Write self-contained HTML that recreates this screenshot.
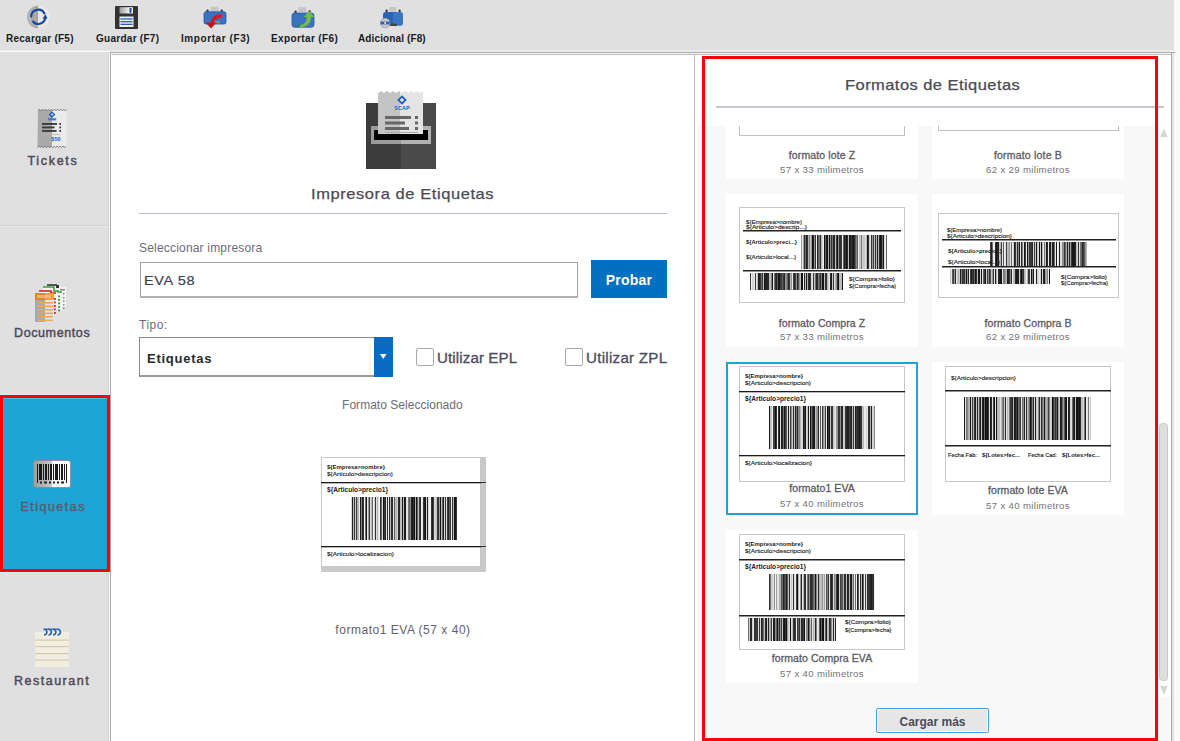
<!DOCTYPE html><html><head><meta charset="utf-8"><style>
html,body{margin:0;padding:0;}
body{width:1180px;height:741px;position:relative;overflow:hidden;background:#e0e0e0;font-family:'Liberation Sans',sans-serif;}
div{box-sizing:border-box;}
</style></head><body>
<div style="position:absolute;left:0px;top:50px;width:1180px;height:2px;background:#ececec"></div>
<div style="position:absolute;left:0px;top:51px;width:110px;height:1px;background:#fafafa"></div>
<div style="position:absolute;left:1174px;top:0px;width:6px;height:741px;background:#fafafa"></div>
<div style="position:absolute;left:0px;top:52px;width:110px;height:689px;background:#e0e0e0"></div>
<div style="position:absolute;left:108px;top:52px;width:1px;height:689px;background:#d4d4d4"></div>
<div style="position:absolute;left:109px;top:52px;width:1px;height:689px;background:#fafafa"></div>
<div style="position:absolute;left:0px;top:225px;width:108px;height:1px;background:#cfcfcf"></div>
<div style="position:absolute;left:0px;top:226px;width:108px;height:1px;background:#ececec"></div>
<div style="position:absolute;left:110px;top:52px;width:1065px;height:1px;background:#aaaaaa"></div>
<div style="position:absolute;left:110px;top:52px;width:1px;height:689px;background:#aaaaaa"></div>
<div style="position:absolute;left:111px;top:53px;width:1064px;height:688px;background:#f8f8f8"></div>
<div style="position:absolute;left:112px;top:54px;width:1059px;height:1px;background:#bbbbbb"></div>
<div style="position:absolute;left:111px;top:55px;width:1060px;height:686px;background:#ffffff"></div>
<div style="position:absolute;left:1171px;top:53px;width:1px;height:688px;background:#aaaaaa"></div>
<div style="position:absolute;left:1172px;top:53px;width:2px;height:688px;background:#e4e4e4"></div>
<div style="position:absolute;left:694px;top:55px;width:1px;height:686px;background:#bbbbbb"></div>
<svg style="position:absolute;left:0;top:0" width="440" height="32">
<defs>
<linearGradient id="rcg" x1="0" x2="1"><stop offset="0" stop-color="#b4b4b4"/><stop offset="0.48" stop-color="#a4a4a4"/><stop offset="0.5" stop-color="#e6e6e6"/><stop offset="1" stop-color="#ececec"/></linearGradient>
<linearGradient id="flg" x1="0" x2="1"><stop offset="0" stop-color="#9a9a9a"/><stop offset="0.7" stop-color="#f2f2f2"/></linearGradient>
<linearGradient id="redg" x1="0" x2="1" y1="1" y2="0"><stop offset="0" stop-color="#a81c22"/><stop offset="1" stop-color="#f01212"/></linearGradient>
<linearGradient id="blg" x1="0" x2="1"><stop offset="0.5" stop-color="#2c64b2"/><stop offset="0.5" stop-color="#3a76c6"/></linearGradient>
</defs>
<!-- recargar -->
<circle cx="38.2" cy="17" r="11.2" fill="url(#rcg)"/>
<circle cx="38.2" cy="17" r="8.6" fill="none" stroke="#d8d0c4" stroke-width="0.8" opacity="0.7"/>
<path d="M31.2,16.6 A7,7 0 0 1 44.4,13.4" fill="none" stroke="#1a48a0" stroke-width="2.2" stroke-linecap="round"/>
<path d="M45.2,17.6 A7,7 0 0 1 32.4,20.8" fill="none" stroke="#1a48a0" stroke-width="2.2"/>
<polygon points="42.6,18.6 47.6,18.4 45.3,14.2" fill="#1a48a0"/>
<!-- guardar -->
<rect x="115" y="6" width="23" height="23" rx="1" fill="#333"/>
<rect x="119.5" y="7.2" width="13.5" height="6.3" fill="url(#flg)"/>
<rect x="129.5" y="8" width="2" height="4.8" fill="#1a48a0"/>
<rect x="119.5" y="16.5" width="14" height="10.5" fill="#f0f0f0"/>
<rect x="120.5" y="18.3" width="12" height="1.3" fill="#2a5fb8"/><rect x="120.5" y="21" width="12" height="1.3" fill="#2a5fb8"/><rect x="120.5" y="23.7" width="12" height="1.3" fill="#2a5fb8"/>
<!-- importar -->
<rect x="210.8" y="6.8" width="8" height="4.6" fill="#c6c6c6"/>
<circle cx="207.5" cy="10.8" r="1.2" fill="#333"/><circle cx="221.8" cy="10.8" r="1.2" fill="#333"/>
<rect x="204" y="11.8" width="22" height="12.2" rx="2" fill="#3a72c2" stroke="#2456a6" stroke-width="0.8"/>
<rect x="214" y="21" width="6" height="2.4" fill="#8a8a8a"/>
<path d="M222,14.4 C215.6,14 211.5,17 211,22.6 L205.4,22.6 L211,28.4 L216.6,22.6 L214.2,22.6 C214.4,19.6 216.8,17.6 222,17.4 Z" fill="url(#redg)" transform="translate(0,0)"/>
<!-- exportar -->
<rect x="298.3" y="7.2" width="8" height="4.8" fill="#c6c6c6"/>
<circle cx="295.6" cy="11.8" r="1.2" fill="#333"/><circle cx="309.6" cy="11.4" r="1.2" fill="#333"/>
<rect x="292" y="13" width="22" height="14.2" rx="2.6" fill="#3a72c2" stroke="#2456a6" stroke-width="0.8"/>
<rect x="297.5" y="24.5" width="6" height="2.2" fill="#2c8a2c"/>
<path d="M300,27.4 C307,27.4 311.2,23 311,17 L314.2,17 L309.2,11 L303.6,17 L306.6,17 C306.8,21.6 304.6,24.6 300,25 Z" fill="#74bb4a"/>
<!-- adicional -->
<rect x="389.4" y="7" width="6.8" height="4.8" fill="#c6c6c6"/>
<circle cx="386.6" cy="10.8" r="1.2" fill="#333"/><circle cx="399.6" cy="10.8" r="1.2" fill="#333"/>
<rect x="383" y="12" width="20" height="13.8" rx="2.4" fill="url(#blg)"/>
<rect x="390.5" y="23.6" width="6.4" height="2.4" fill="#444"/>
<circle cx="385.2" cy="23" r="4.8" fill="#c8c8c8" stroke="#8a8a8a" stroke-width="0.6"/>
<rect x="380.6" y="21.6" width="9" height="2.8" fill="#2a62b8"/>
<circle cx="385.2" cy="23" r="1" fill="#eee"/>
</svg>
<div style="position:absolute;left:6px;top:34.14px;font-size:10px;line-height:10px;font-weight:bold;color:#1a1a1a;letter-spacing:0.25px;white-space:pre;">Recargar (F5)</div>
<div style="position:absolute;left:96px;top:34.14px;font-size:10px;line-height:10px;font-weight:bold;color:#1a1a1a;letter-spacing:0.27px;white-space:pre;">Guardar (F7)</div>
<div style="position:absolute;left:181px;top:34.14px;font-size:10px;line-height:10px;font-weight:bold;color:#1a1a1a;letter-spacing:0.58px;white-space:pre;">Importar (F3)</div>
<div style="position:absolute;left:271px;top:34.14px;font-size:10px;line-height:10px;font-weight:bold;color:#1a1a1a;letter-spacing:0.38px;white-space:pre;">Exportar (F6)</div>
<div style="position:absolute;left:358px;top:34.14px;font-size:10px;line-height:10px;font-weight:bold;color:#1a1a1a;letter-spacing:0.12px;white-space:pre;">Adicional (F8)</div>
<svg style="position:absolute;left:0;top:100px" width="100" height="50" viewBox="0 100 100 50">
<defs><linearGradient id="tk" x1="0" x2="1"><stop offset="0.5" stop-color="#a9a9a9"/><stop offset="0.5" stop-color="#ebebeb"/></linearGradient></defs>
<path d="M38,110.5 L39.5,109.2 L41.0,110.8 L42.5,109.2 L44.0,110.8 L45.5,109.2 L47.0,110.8 L48.5,109.2 L50.0,110.8 L51.5,109.2 L53.0,110.8 L54.5,109.2 L56.0,110.8 L57.5,109.2 L59.0,110.8 L60.5,109.2 L62.0,110.8 L63.5,109.2 L65.0,110.8 L66.5,109.2 L66.5,110.5 L66.5,146.5 L66.0,146.2 L64.5,147.6 L63.0,146.2 L61.5,147.6 L60.0,146.2 L58.5,147.6 L57.0,146.2 L55.5,147.6 L54.0,146.2 L52.5,147.6 L51.0,146.2 L49.5,147.6 L48.0,146.2 L46.5,147.6 L45.0,146.2 L43.5,147.6 L42.0,146.2 L40.5,147.6 L39.0,146.2 L37.5,147.6 Z" fill="url(#tk)"/>
<path d="M38,110.5 L39.5,109.2 L41.0,110.8 L42.5,109.2 L44.0,110.8 L45.5,109.2 L47.0,110.8 L48.5,109.2 L50.0,110.8 L51.5,109.2 L53.0,110.8 L54.5,109.2 L56.0,110.8 L57.5,109.2 L59.0,110.8 L60.5,109.2 L62.0,110.8 L63.5,109.2 L65.0,110.8 L66.5,109.2" fill="none" stroke="#6a6a6a" stroke-width="0.8"/>
<path d="M66,146.2 L66.0,146.2 L64.5,147.6 L63.0,146.2 L61.5,147.6 L60.0,146.2 L58.5,147.6 L57.0,146.2 L55.5,147.6 L54.0,146.2 L52.5,147.6 L51.0,146.2 L49.5,147.6 L48.0,146.2 L46.5,147.6 L45.0,146.2 L43.5,147.6 L42.0,146.2 L40.5,147.6 L39.0,146.2 L37.5,147.6" fill="none" stroke="#6a6a6a" stroke-width="0.8"/>
<rect x="50.3" y="112.9" width="3.4" height="3.4" transform="rotate(45 52 114.6)" fill="none" stroke="#1a5fc8" stroke-width="1.3"/>
<rect x="48.2" y="118.2" width="8" height="2.2" fill="#2a68c0" opacity="0.85"/>
<rect x="42" y="123" width="15" height="1.9" fill="#3a3a3a"/><rect x="59.4" y="123" width="1.6" height="1.9" fill="#3a3a3a"/>
<rect x="42" y="126.5" width="12.5" height="1.9" fill="#3a3a3a"/><rect x="59.4" y="126.5" width="1.6" height="1.9" fill="#3a3a3a"/>
<rect x="42" y="130" width="14.5" height="1.9" fill="#3a3a3a"/><rect x="59.4" y="130" width="1.6" height="1.9" fill="#3a3a3a"/>
<rect x="42" y="134" width="18" height="0.8" fill="#b8b8b8"/>
<text x="56" y="141.2" font-family="Liberation Sans" font-size="5.6" font-weight="bold" fill="#1a5fc8" text-anchor="middle">$50</text>
</svg>
<div style="position:absolute;left:27.5px;top:154.62px;font-size:12.5px;line-height:12.5px;font-weight:normal;color:#4a4a5c;letter-spacing:1.68px;white-space:pre;-webkit-text-stroke:0.45px #4a4a5c;">Tickets</div>
<svg style="position:absolute;left:34px;top:282px" width="35" height="41">
<path d="M13,2 h10 l3,2 v1 h6 v20 h-19 Z" fill="#f4f4f4"/>
<rect x="13" y="2" width="10" height="2" fill="#555"/><rect x="22" y="3" width="3" height="3" fill="#333"/>
<rect x="26" y="7" width="5" height="1.5" fill="#888"/>
<g fill="#888"><rect x="29" y="11" width="1.5" height="1.5"/><rect x="29" y="15" width="1.5" height="1.5"/><rect x="29" y="18.5" width="1.5" height="1.5"/><rect x="29" y="22" width="1.5" height="1.5"/><rect x="29" y="25.5" width="1.5" height="1.5"/></g>
<path d="M9,5 h11 l4,4 h4 v19 h-19 Z" fill="#f6f6f6"/>
<path d="M9,5 h11 v4 h4 v1 h4" fill="none" stroke="#3aa03a" stroke-width="1.6"/>
<g fill="#3aa03a"><rect x="24" y="13.5" width="2" height="1.8"/><rect x="24" y="17" width="2" height="1.8"/><rect x="24" y="20.5" width="2" height="1.8"/><rect x="24" y="24" width="2" height="1.8"/><rect x="24" y="27.5" width="2" height="1.8"/></g>
<path d="M5,9 h9 v2 h5 l3,3 v17 h-17 Z" fill="#f6f6f6"/>
<path d="M5,9 h12 v2 h5" fill="none" stroke="#d81818" stroke-width="1.6"/>
<g fill="#e01818"><rect x="20" y="16" width="1.8" height="1.8"/><rect x="20" y="19.5" width="1.8" height="1.8"/><rect x="20" y="23" width="1.8" height="1.8"/><rect x="20" y="26.5" width="1.8" height="1.8"/><rect x="20" y="30" width="1.8" height="1.8"/></g>
<rect x="1" y="11" width="19" height="29" fill="#dde4ea"/>
<rect x="1" y="11" width="10" height="29" fill="#a6a9ae"/>
<rect x="1" y="11" width="19" height="7" fill="#d88a2a"/>
<rect x="11" y="11" width="9" height="7" fill="#eda040"/>
<rect x="3" y="13" width="14" height="3" fill="#f6d0a0" opacity="0.6"/>
<g fill="#f0a850"><rect x="4" y="20" width="15" height="1.6"/><rect x="4" y="23.5" width="15" height="1.6"/><rect x="4" y="27" width="15" height="1.6"/><rect x="4" y="30.5" width="15" height="1.6"/><rect x="4" y="34" width="15" height="1.6"/><rect x="4" y="37.5" width="15" height="1.6"/></g>
</svg>
<div style="position:absolute;left:14px;top:326.62px;font-size:12.5px;line-height:12.5px;font-weight:normal;color:#4a4a5c;letter-spacing:0.61px;white-space:pre;-webkit-text-stroke:0.45px #4a4a5c;">Documentos</div>
<div style="position:absolute;left:0px;top:394px;width:110px;height:1px;background:#d8ecee"></div>
<div style="position:absolute;left:0px;top:395px;width:110px;height:177px;background:#1ea5d6;border:3px solid #ff0000"></div>
<div style="position:absolute;left:3px;top:398px;width:104px;height:1px;background:#3cbde8"></div>
<div style="position:absolute;left:0px;top:572px;width:108px;height:1px;background:#d8ecee"></div>
<svg style="position:absolute;left:33px;top:460px" width="38" height="29">
<defs><linearGradient id="bc" x1="0" x2="1"><stop offset="0" stop-color="#9c9c9c"/><stop offset="0.5" stop-color="#c8c8c8"/><stop offset="0.5" stop-color="#f4f4f4"/><stop offset="1" stop-color="#ffffff"/></linearGradient></defs>
<rect x="0.5" y="0.5" width="37" height="27" rx="2.5" fill="url(#bc)" stroke="#8a8a8a" stroke-width="0.8"/>
<g fill="#1a1a1a"><rect x="4" y="4" width="1" height="19"/><rect x="6" y="4" width="3" height="16"/><rect x="10" y="4" width="1" height="16"/><rect x="12" y="4" width="2" height="16"/><rect x="15" y="4" width="1" height="16"/><rect x="17" y="4" width="2" height="16"/><rect x="20" y="4" width="1" height="16"/><rect x="22" y="4" width="3" height="16"/><rect x="26" y="4" width="1" height="16"/><rect x="28" y="4" width="2" height="16"/><rect x="31" y="4" width="1" height="16"/><rect x="33" y="4" width="1" height="19"/></g>
<g fill="#222"><rect x="7" y="21.5" width="2" height="2"/><rect x="11" y="21.5" width="3" height="2"/><rect x="16" y="21.5" width="2" height="2"/><rect x="20" y="21.5" width="2" height="2"/><rect x="24" y="21.5" width="2" height="2"/><rect x="28" y="21.5" width="3" height="2"/></g>
</svg>
<div style="position:absolute;left:20.5px;top:500.62px;font-size:12.5px;line-height:12.5px;font-weight:normal;color:#56606c;letter-spacing:1.47px;white-space:pre;-webkit-text-stroke:0.45px #56606c;">Etiquetas</div>
<svg style="position:absolute;left:35px;top:627px" width="35" height="41">
<rect x="0" y="5" width="34" height="35" fill="#f1ede1"/>
<g fill="#d6cba8"><rect x="0" y="12.5" width="34" height="1.2"/><rect x="0" y="19" width="34" height="1.2"/><rect x="0" y="26" width="34" height="1.2"/><rect x="0" y="32.5" width="34" height="1.2"/></g>
<g fill="none" stroke="#1f5fb8" stroke-width="1.6"><path d="M9,2.2 a2.9,2.9 0 1 1 0,5.8"/><path d="M13.5,2.2 a2.9,2.9 0 1 1 0,5.8"/><path d="M18,2.2 a2.9,2.9 0 1 1 0,5.8"/><path d="M22.5,2.2 a2.9,2.9 0 1 1 0,5.8"/></g><path d="M8.5,2.2 h15" stroke="#1f5fb8" stroke-width="1.2"/>
</svg>
<div style="position:absolute;left:14px;top:674.52px;font-size:12.5px;line-height:12.5px;font-weight:normal;color:#4a4a5c;letter-spacing:1.5px;white-space:pre;-webkit-text-stroke:0.45px #4a4a5c;">Restaurant</div>
<svg style="position:absolute;left:366px;top:91px" width="72" height="78">
<defs><linearGradient id="pg" x1="0" x2="1"><stop offset="0.5" stop-color="#3c3c3c"/><stop offset="0.5" stop-color="#4a4a4a"/></linearGradient>
<linearGradient id="pp" x1="0" x2="1"><stop offset="0.5" stop-color="#c4c4c4"/><stop offset="0.5" stop-color="#e4e4e4"/></linearGradient>
<linearGradient id="ps" x1="0" x2="1"><stop offset="0.5" stop-color="#9a9a9a"/><stop offset="0.5" stop-color="#b2b2b2"/></linearGradient></defs>
<rect x="0" y="12" width="70" height="66" fill="url(#pg)"/>
<rect x="5" y="35" width="60" height="18" fill="url(#ps)"/>
<rect x="8" y="39" width="54" height="10" fill="#000"/>
<path d="M12,2 l3,-2 l3,2 l3,-2 l3,2 l3,-2 l3,2 l3,-2 l3,2 l3,-2 l3,2 l3,-2 l3,2 l3,-2 l3,2 l3,-2 V43 H12 Z" fill="url(#pp)"/>
<rect x="33.5" y="6.5" width="5" height="5" transform="rotate(45 36 9)" fill="none" stroke="#1a5fc8" stroke-width="1.8"/>
<text x="36" y="19" font-family="Liberation Sans" font-size="5.5" font-weight="bold" fill="#1a5fc8" text-anchor="middle">SCAP</text>
<rect x="19" y="25" width="26" height="3" fill="#666"/><rect x="49" y="25" width="3" height="3" fill="#666"/>
<rect x="19" y="30.5" width="20" height="3" fill="#666"/><rect x="49" y="30.5" width="3" height="3" fill="#666"/>
<rect x="19" y="36" width="24" height="3" fill="#666"/><rect x="49" y="36" width="3" height="3" fill="#666"/>
<rect x="19" y="41" width="33" height="1" fill="#aaa"/>
</svg>
<div style="position:absolute;left:311px;top:185.60px;font-size:15px;line-height:15px;font-weight:normal;color:#4a4a55;letter-spacing:0.52px;white-space:pre;-webkit-text-stroke:0.25px #4a4a55;transform:scaleX(1.1);transform-origin:0 0;">Impresora de Etiquetas</div>
<div style="position:absolute;left:139px;top:213px;width:528px;height:1px;background:#b4b8c4"></div>
<div style="position:absolute;left:139px;top:242.04px;font-size:12px;line-height:12px;font-weight:normal;color:#6c6c78;letter-spacing:0.19px;white-space:pre;">Seleccionar impresora</div>
<div style="position:absolute;left:140px;top:262px;width:438px;height:36px;background:#fff;border:1px solid #a0a0a0;border-bottom:2px solid #b0b0b0;border-radius:1px"></div>
<div style="position:absolute;left:144.3px;top:273.80px;font-size:13px;line-height:13px;font-weight:normal;color:#3c3c4a;letter-spacing:0.55px;white-space:pre;-webkit-text-stroke:0.15px #3c3c4a;transform:scaleX(1.12);transform-origin:0 0;">EVA 58</div>
<div style="position:absolute;left:591px;top:260px;width:76px;height:38px;background:#0070c0"></div>
<div style="position:absolute;left:479px;width:300px;text-align:center;top:273.25px;font-size:14px;line-height:14px;font-weight:bold;color:#ffffff;letter-spacing:0.2px;white-space:pre;">Probar</div>
<div style="position:absolute;left:139px;top:318.84px;font-size:12px;line-height:12px;font-weight:normal;color:#6c6c78;letter-spacing:0.5px;white-space:pre;">Tipo:</div>
<div style="position:absolute;left:139px;top:337px;width:254px;height:40px;background:#fff;border:1px solid #8a8a8a;border-bottom:2px solid #9a9a9a"></div>
<div style="position:absolute;left:374px;top:337px;width:19px;height:40px;background:#0a6cc0"></div>
<svg style="position:absolute;left:379px;top:353px" width="9" height="7"><polygon points="1,1 7.5,1 4.25,6" fill="#fff"/></svg>
<div style="position:absolute;left:147px;top:351.70px;font-size:13px;line-height:13px;font-weight:bold;color:#2a2a32;letter-spacing:0.75px;white-space:pre;">Etiquetas</div>
<div style="position:absolute;left:416px;top:348px;width:18px;height:18px;background:#fff;border:1px solid #a8a8a8;border-radius:2px"></div>
<div style="position:absolute;left:437px;top:351.05px;font-size:14px;line-height:14px;font-weight:normal;color:#4c4c5c;letter-spacing:0.1px;white-space:pre;-webkit-text-stroke:0.3px #4c4c5c;transform:scaleX(1.08);transform-origin:0 0;">Utilizar EPL</div>
<div style="position:absolute;left:565px;top:348px;width:18px;height:18px;background:#fff;border:1px solid #a8a8a8;border-radius:2px"></div>
<div style="position:absolute;left:586px;top:350.75px;font-size:14px;line-height:14px;font-weight:normal;color:#4c4c5c;letter-spacing:0.25px;white-space:pre;-webkit-text-stroke:0.3px #4c4c5c;transform:scaleX(1.08);transform-origin:0 0;">Utilizar ZPL</div>
<div style="position:absolute;left:252.39999999999998px;width:300px;text-align:center;top:398.94px;font-size:12px;line-height:12px;font-weight:normal;color:#6c6c78;letter-spacing:0.03px;white-space:pre;">Formato Seleccionado</div>
<div style="position:absolute;left:321px;top:457px;width:165px;height:115px;background:#c9c9c9"></div>
<div style="position:absolute;left:321px;top:457px;width:160px;height:110px"><svg width="160" height="110" style="position:absolute;left:0;top:0"><rect x="0.5" y="0.5" width="159" height="109" fill="#fff" stroke="#c8c8c8"/><text x="6" y="12" font-family="Liberation Sans" font-size="5.6" font-weight="bold" fill="#222" textLength="58" lengthAdjust="spacingAndGlyphs">${Empresa&gt;nombre}</text><text x="6" y="19" font-family="Liberation Sans" font-size="5.6" font-weight="normal" fill="#222" stroke="#222" stroke-width="0.12" textLength="66" lengthAdjust="spacingAndGlyphs">${Articulo&gt;descripcion}</text><rect x="0" y="25" width="160" height="1.3" fill="#1a1a1a"/><text x="6" y="35" font-family="Liberation Sans" font-size="6.8" font-weight="bold" fill="#222" textLength="61" lengthAdjust="spacingAndGlyphs">${Articulo&gt;precio1}</text><rect x="30" y="40" width="1" height="43" fill="#d9d9d9"/><rect x="31" y="40" width="1" height="43" fill="#1c1c1c"/><rect x="32" y="40" width="1" height="43" fill="#bebebe"/><rect x="33" y="40" width="1" height="43" fill="#333333"/><rect x="34" y="40" width="1" height="43" fill="#cecece"/><rect x="35" y="40" width="1" height="43" fill="#383838"/><rect x="36" y="40" width="1" height="43" fill="#b0b0b0"/><rect x="37" y="40" width="1" height="43" fill="#b3b3b3"/><rect x="38" y="40" width="1" height="43" fill="#efefef"/><rect x="39" y="40" width="1" height="43" fill="#1c1c1c"/><rect x="40" y="40" width="1" height="43" fill="#868686"/><rect x="41" y="40" width="1" height="43" fill="#242424"/><rect x="42" y="40" width="1" height="43" fill="#333333"/><rect x="43" y="40" width="1" height="43" fill="#f4f4f4"/><rect x="44" y="40" width="1" height="43" fill="#717171"/><rect x="45" y="40" width="1" height="43" fill="#151515"/><rect x="46" y="40" width="1" height="43" fill="#e8e8e8"/><rect x="47" y="40" width="1" height="43" fill="#999999"/><rect x="48" y="40" width="1" height="43" fill="#3d3d3d"/><rect x="49" y="40" width="1" height="43" fill="#dadada"/><rect x="50" y="40" width="1" height="43" fill="#bcbcbc"/><rect x="51" y="40" width="1" height="43" fill="#5f5f5f"/><rect x="52" y="40" width="1" height="43" fill="#f4f4f4"/><rect x="53" y="40" width="1" height="43" fill="#d2d2d2"/><rect x="54" y="40" width="1" height="43" fill="#333333"/><rect x="55" y="40" width="1" height="43" fill="#dcdcdc"/><rect x="56" y="40" width="1" height="43" fill="#b7b7b7"/><rect x="57" y="40" width="1" height="43" fill="#e3e3e3"/><rect x="58" y="40" width="1" height="43" fill="#f3f3f3"/><rect x="59" y="40" width="1" height="43" fill="#343434"/><rect x="60" y="40" width="1" height="43" fill="#666666"/><rect x="61" y="40" width="1" height="43" fill="#e1e1e1"/><rect x="62" y="40" width="1" height="43" fill="#121212"/><rect x="63" y="40" width="1" height="43" fill="#383838"/><rect x="64" y="40" width="1" height="43" fill="#262626"/><rect x="65" y="40" width="1" height="43" fill="#e7e7e7"/><rect x="66" y="40" width="1" height="43" fill="#303030"/><rect x="67" y="40" width="1" height="43" fill="#eeeeee"/><rect x="68" y="40" width="1" height="43" fill="#2e2e2e"/><rect x="69" y="40" width="1" height="43" fill="#bcbcbc"/><rect x="70" y="40" width="1" height="43" fill="#313131"/><rect x="71" y="40" width="1" height="43" fill="#2f2f2f"/><rect x="72" y="40" width="1" height="43" fill="#e5e5e5"/><rect x="73" y="40" width="1" height="43" fill="#5c5c5c"/><rect x="74" y="40" width="1" height="43" fill="#c2c2c2"/><rect x="75" y="40" width="1" height="43" fill="#b3b3b3"/><rect x="76" y="40" width="1" height="43" fill="#cecece"/><rect x="77" y="40" width="1" height="43" fill="#2d2d2d"/><rect x="78" y="40" width="1" height="43" fill="#282828"/><rect x="79" y="40" width="1" height="43" fill="#bdbdbd"/><rect x="80" y="40" width="1" height="43" fill="#c1c1c1"/><rect x="81" y="40" width="1" height="43" fill="#1d1d1d"/><rect x="82" y="40" width="1" height="43" fill="#bbbbbb"/><rect x="83" y="40" width="1" height="43" fill="#191919"/><rect x="84" y="40" width="1" height="43" fill="#1e1e1e"/><rect x="85" y="40" width="1" height="43" fill="#e0e0e0"/><rect x="86" y="40" width="1" height="43" fill="#e5e5e5"/><rect x="87" y="40" width="1" height="43" fill="#777777"/><rect x="88" y="40" width="1" height="43" fill="#626262"/><rect x="89" y="40" width="1" height="43" fill="#8a8a8a"/><rect x="90" y="40" width="1" height="43" fill="#212121"/><rect x="91" y="40" width="1" height="43" fill="#1c1c1c"/><rect x="92" y="40" width="1" height="43" fill="#2f2f2f"/><rect x="93" y="40" width="1" height="43" fill="#111111"/><rect x="94" y="40" width="1" height="43" fill="#b1b1b1"/><rect x="95" y="40" width="1" height="43" fill="#161616"/><rect x="96" y="40" width="1" height="43" fill="#5f5f5f"/><rect x="97" y="40" width="1" height="43" fill="#c5c5c5"/><rect x="98" y="40" width="1" height="43" fill="#3a3a3a"/><rect x="99" y="40" width="1" height="43" fill="#2d2d2d"/><rect x="100" y="40" width="1" height="43" fill="#f4f4f4"/><rect x="101" y="40" width="1" height="43" fill="#e3e3e3"/><rect x="102" y="40" width="1" height="43" fill="#393939"/><rect x="103" y="40" width="1" height="43" fill="#202020"/><rect x="104" y="40" width="1" height="43" fill="#151515"/><rect x="105" y="40" width="1" height="43" fill="#d9d9d9"/><rect x="106" y="40" width="1" height="43" fill="#1c1c1c"/><rect x="107" y="40" width="1" height="43" fill="#dfdfdf"/><rect x="108" y="40" width="1" height="43" fill="#ededed"/><rect x="109" y="40" width="1" height="43" fill="#f3f3f3"/><rect x="110" y="40" width="1" height="43" fill="#323232"/><rect x="111" y="40" width="1" height="43" fill="#202020"/><rect x="112" y="40" width="1" height="43" fill="#3f3f3f"/><rect x="113" y="40" width="1" height="43" fill="#d7d7d7"/><rect x="114" y="40" width="1" height="43" fill="#d3d3d3"/><rect x="115" y="40" width="1" height="43" fill="#c2c2c2"/><rect x="116" y="40" width="1" height="43" fill="#3c3c3c"/><rect x="117" y="40" width="1" height="43" fill="#353535"/><rect x="118" y="40" width="1" height="43" fill="#9f9f9f"/><rect x="119" y="40" width="1" height="43" fill="#111111"/><rect x="120" y="40" width="1" height="43" fill="#bfbfbf"/><rect x="121" y="40" width="1" height="43" fill="#656565"/><rect x="122" y="40" width="1" height="43" fill="#1a1a1a"/><rect x="123" y="40" width="1" height="43" fill="#dbdbdb"/><rect x="124" y="40" width="1" height="43" fill="#313131"/><rect x="125" y="40" width="1" height="43" fill="#e0e0e0"/><rect x="126" y="40" width="1" height="43" fill="#3c3c3c"/><rect x="127" y="40" width="1" height="43" fill="#272727"/><rect x="128" y="40" width="1" height="43" fill="#555555"/><rect x="129" y="40" width="1" height="43" fill="#3f3f3f"/><rect x="130" y="40" width="1" height="43" fill="#efefef"/><rect x="131" y="40" width="1" height="43" fill="#323232"/><rect x="132" y="40" width="1" height="43" fill="#b9b9b9"/><rect x="133" y="40" width="1" height="43" fill="#171717"/><rect x="134" y="40" width="1" height="43" fill="#181818"/><rect x="135" y="40" width="1" height="43" fill="#383838"/><rect x="0" y="89" width="160" height="1.3" fill="#1a1a1a"/><text x="6" y="99" font-family="Liberation Sans" font-size="5.6" font-weight="normal" fill="#222" stroke="#222" stroke-width="0.12" textLength="67" lengthAdjust="spacingAndGlyphs">${Articulo&gt;localizacion}</text></svg></div>
<div style="position:absolute;left:481px;top:482px;width:5px;height:1px;background:#333"></div>
<div style="position:absolute;left:481px;top:546px;width:5px;height:1px;background:#333"></div>
<div style="position:absolute;left:253px;width:300px;text-align:center;top:623.94px;font-size:12px;line-height:12px;font-weight:normal;color:#62626e;letter-spacing:0.52px;white-space:pre;">formato1 EVA (57 x 40)</div>
<div style="position:absolute;left:697px;top:126px;width:474px;height:615px;background:#f8f8f8"></div>
<div style="position:absolute;left:1158px;top:126px;width:13px;height:571px;background:#ffffff"></div>
<svg style="position:absolute;left:1158px;top:126px" width="13" height="571"><polygon points="2,11 6,2.5 9.5,11" fill="#d6d6d6"/><rect x="1.5" y="297.5" width="8" height="257" rx="3" fill="#dedede" stroke="#c8c8c8"/><polygon points="2,560 9.5,560 6,569" fill="#d6d6d6"/></svg>
<div style="position:absolute;left:844.5px;top:76.60px;font-size:15px;line-height:15px;font-weight:normal;color:#4a4a52;letter-spacing:0.4px;white-space:pre;-webkit-text-stroke:0.25px #4a4a52;transform:scaleX(1.1);transform-origin:0 0;">Formatos de Etiquetas</div>
<div style="position:absolute;left:716px;top:106px;width:448px;height:2px;background:#c4c8d0"></div>
<div style="position:absolute;left:726px;top:126px;width:192px;height:53px;background:#fff"></div>
<div style="position:absolute;left:739px;top:126px;width:166px;height:10px;border:1px solid #c0c0c0;border-top:none"></div>
<div style="position:absolute;left:672px;width:300px;text-align:center;top:150.21px;font-size:10.5px;line-height:10.5px;font-weight:normal;color:#5a5a62;letter-spacing:0.12px;white-space:pre;-webkit-text-stroke:0.3px #5a5a62;">formato lote Z</div>
<div style="position:absolute;left:672px;width:300px;text-align:center;top:164.87px;font-size:9.6px;line-height:9.6px;font-weight:normal;color:#727278;letter-spacing:0.33px;white-space:pre;">57 x 33 milimetros</div>
<div style="position:absolute;left:932px;top:126px;width:192px;height:53px;background:#fff"></div>
<div style="position:absolute;left:938px;top:126px;width:181px;height:5px;border:1px solid #c0c0c0;border-top:none"></div>
<div style="position:absolute;left:878px;width:300px;text-align:center;top:150.21px;font-size:10.5px;line-height:10.5px;font-weight:normal;color:#5a5a62;letter-spacing:0.2px;white-space:pre;-webkit-text-stroke:0.3px #5a5a62;">formato lote B</div>
<div style="position:absolute;left:878px;width:300px;text-align:center;top:164.87px;font-size:9.6px;line-height:9.6px;font-weight:normal;color:#727278;letter-spacing:0.33px;white-space:pre;">62 x 29 milimetros</div>
<div style="position:absolute;left:726px;top:194px;width:192px;height:153px;background:#fff;"></div><div style="position:absolute;left:739px;top:207px;width:166px;height:96px;"><svg width="166" height="96" style="position:absolute;left:0;top:0"><rect x="0.5" y="0.5" width="165" height="95" fill="#fff" stroke="#c8c8c8"/><text x="7" y="17" font-family="Liberation Sans" font-size="5.2" font-weight="normal" fill="#222" stroke="#222" stroke-width="0.12" textLength="56" lengthAdjust="spacingAndGlyphs">${Empresa&gt;nombre}</text><text x="7" y="22" font-family="Liberation Sans" font-size="5.2" font-weight="normal" fill="#222" stroke="#222" stroke-width="0.12" textLength="61" lengthAdjust="spacingAndGlyphs">${Articulo&gt;descrip...}</text><rect x="4" y="23" width="158" height="1.5" fill="#222"/><text x="7" y="37" font-family="Liberation Sans" font-size="5.4" font-weight="bold" fill="#222" textLength="51" lengthAdjust="spacingAndGlyphs">${Articulo&gt;preci...}</text><text x="7" y="52" font-family="Liberation Sans" font-size="5.4" font-weight="normal" fill="#222" stroke="#222" stroke-width="0.12" textLength="50" lengthAdjust="spacingAndGlyphs">${Articulo&gt;local...}</text><rect x="62" y="28" width="1" height="34" fill="#9c9c9c"/><rect x="63" y="28" width="1" height="34" fill="#ebebeb"/><rect x="64" y="28" width="1" height="34" fill="#a0a0a0"/><rect x="65" y="28" width="1" height="34" fill="#303030"/><rect x="66" y="28" width="1" height="34" fill="#6c6c6c"/><rect x="67" y="28" width="1" height="34" fill="#232323"/><rect x="68" y="28" width="1" height="34" fill="#323232"/><rect x="69" y="28" width="1" height="34" fill="#b5b5b5"/><rect x="70" y="28" width="1" height="34" fill="#878787"/><rect x="71" y="28" width="1" height="34" fill="#c4c4c4"/><rect x="72" y="28" width="1" height="34" fill="#989898"/><rect x="73" y="28" width="1" height="34" fill="#121212"/><rect x="74" y="28" width="1" height="34" fill="#1f1f1f"/><rect x="75" y="28" width="1" height="34" fill="#909090"/><rect x="76" y="28" width="1" height="34" fill="#353535"/><rect x="77" y="28" width="1" height="34" fill="#f2f2f2"/><rect x="78" y="28" width="1" height="34" fill="#222222"/><rect x="79" y="28" width="1" height="34" fill="#5f5f5f"/><rect x="80" y="28" width="1" height="34" fill="#787878"/><rect x="81" y="28" width="1" height="34" fill="#333333"/><rect x="82" y="28" width="1" height="34" fill="#bababa"/><rect x="83" y="28" width="1" height="34" fill="#d8d8d8"/><rect x="84" y="28" width="1" height="34" fill="#f1f1f1"/><rect x="85" y="28" width="1" height="34" fill="#141414"/><rect x="86" y="28" width="1" height="34" fill="#626262"/><rect x="87" y="28" width="1" height="34" fill="#222222"/><rect x="88" y="28" width="1" height="34" fill="#111111"/><rect x="89" y="28" width="1" height="34" fill="#b0b0b0"/><rect x="90" y="28" width="1" height="34" fill="#131313"/><rect x="91" y="28" width="1" height="34" fill="#878787"/><rect x="92" y="28" width="1" height="34" fill="#343434"/><rect x="93" y="28" width="1" height="34" fill="#777777"/><rect x="94" y="28" width="1" height="34" fill="#232323"/><rect x="95" y="28" width="1" height="34" fill="#2a2a2a"/><rect x="96" y="28" width="1" height="34" fill="#bfbfbf"/><rect x="97" y="28" width="1" height="34" fill="#3d3d3d"/><rect x="98" y="28" width="1" height="34" fill="#131313"/><rect x="99" y="28" width="1" height="34" fill="#939393"/><rect x="100" y="28" width="1" height="34" fill="#333333"/><rect x="101" y="28" width="1" height="34" fill="#303030"/><rect x="102" y="28" width="1" height="34" fill="#3e3e3e"/><rect x="103" y="28" width="1" height="34" fill="#e5e5e5"/><rect x="104" y="28" width="1" height="34" fill="#636363"/><rect x="105" y="28" width="1" height="34" fill="#1d1d1d"/><rect x="106" y="28" width="1" height="34" fill="#353535"/><rect x="107" y="28" width="1" height="34" fill="#111111"/><rect x="108" y="28" width="1" height="34" fill="#292929"/><rect x="109" y="28" width="1" height="34" fill="#bcbcbc"/><rect x="110" y="28" width="1" height="34" fill="#191919"/><rect x="111" y="28" width="1" height="34" fill="#202020"/><rect x="112" y="28" width="1" height="34" fill="#373737"/><rect x="113" y="28" width="1" height="34" fill="#222222"/><rect x="114" y="28" width="1" height="34" fill="#141414"/><rect x="115" y="28" width="1" height="34" fill="#353535"/><rect x="116" y="28" width="1" height="34" fill="#565656"/><rect x="117" y="28" width="1" height="34" fill="#848484"/><rect x="118" y="28" width="1" height="34" fill="#656565"/><rect x="119" y="28" width="1" height="34" fill="#ededed"/><rect x="120" y="28" width="1" height="34" fill="#c1c1c1"/><rect x="121" y="28" width="1" height="34" fill="#c7c7c7"/><rect x="122" y="28" width="1" height="34" fill="#7c7c7c"/><rect x="123" y="28" width="1" height="34" fill="#cfcfcf"/><rect x="124" y="28" width="1" height="34" fill="#c4c4c4"/><rect x="125" y="28" width="1" height="34" fill="#c9c9c9"/><rect x="126" y="28" width="1" height="34" fill="#e1e1e1"/><rect x="127" y="28" width="1" height="34" fill="#bababa"/><rect x="128" y="28" width="1" height="34" fill="#161616"/><rect x="129" y="28" width="1" height="34" fill="#303030"/><rect x="130" y="28" width="1" height="34" fill="#cecece"/><rect x="131" y="28" width="1" height="34" fill="#e2e2e2"/><rect x="132" y="28" width="1" height="34" fill="#363636"/><rect x="133" y="28" width="1" height="34" fill="#979797"/><rect x="134" y="28" width="1" height="34" fill="#3e3e3e"/><rect x="135" y="28" width="1" height="34" fill="#c0c0c0"/><rect x="136" y="28" width="1" height="34" fill="#333333"/><rect x="137" y="28" width="1" height="34" fill="#b9b9b9"/><rect x="138" y="28" width="1" height="34" fill="#1d1d1d"/><rect x="139" y="28" width="1" height="34" fill="#b8b8b8"/><rect x="140" y="28" width="1" height="34" fill="#2c2c2c"/><rect x="141" y="28" width="1" height="34" fill="#121212"/><rect x="142" y="28" width="1" height="34" fill="#272727"/><rect x="143" y="28" width="1" height="34" fill="#656565"/><rect x="144" y="28" width="1" height="34" fill="#181818"/><rect x="145" y="28" width="1" height="34" fill="#dadada"/><rect x="146" y="28" width="1" height="34" fill="#f2f2f2"/><rect x="147" y="28" width="1" height="34" fill="#666666"/><rect x="4" y="63" width="158" height="1.5" fill="#222"/><rect x="11" y="66" width="1" height="17" fill="#3c3c3c"/><rect x="12" y="66" width="1" height="17" fill="#f3f3f3"/><rect x="13" y="66" width="1" height="17" fill="#d2d2d2"/><rect x="14" y="66" width="1" height="17" fill="#d5d5d5"/><rect x="15" y="66" width="1" height="17" fill="#e9e9e9"/><rect x="16" y="66" width="1" height="17" fill="#3b3b3b"/><rect x="17" y="66" width="1" height="17" fill="#e2e2e2"/><rect x="18" y="66" width="1" height="17" fill="#bfbfbf"/><rect x="19" y="66" width="1" height="17" fill="#242424"/><rect x="20" y="66" width="1" height="17" fill="#202020"/><rect x="21" y="66" width="1" height="17" fill="#383838"/><rect x="22" y="66" width="1" height="17" fill="#686868"/><rect x="23" y="66" width="1" height="17" fill="#3a3a3a"/><rect x="24" y="66" width="1" height="17" fill="#c5c5c5"/><rect x="25" y="66" width="1" height="17" fill="#141414"/><rect x="26" y="66" width="1" height="17" fill="#252525"/><rect x="27" y="66" width="1" height="17" fill="#212121"/><rect x="28" y="66" width="1" height="17" fill="#282828"/><rect x="29" y="66" width="1" height="17" fill="#2c2c2c"/><rect x="30" y="66" width="1" height="17" fill="#bcbcbc"/><rect x="31" y="66" width="1" height="17" fill="#bebebe"/><rect x="32" y="66" width="1" height="17" fill="#838383"/><rect x="33" y="66" width="1" height="17" fill="#161616"/><rect x="34" y="66" width="1" height="17" fill="#eeeeee"/><rect x="35" y="66" width="1" height="17" fill="#6d6d6d"/><rect x="36" y="66" width="1" height="17" fill="#373737"/><rect x="37" y="66" width="1" height="17" fill="#222222"/><rect x="38" y="66" width="1" height="17" fill="#626262"/><rect x="39" y="66" width="1" height="17" fill="#151515"/><rect x="40" y="66" width="1" height="17" fill="#171717"/><rect x="41" y="66" width="1" height="17" fill="#3f3f3f"/><rect x="42" y="66" width="1" height="17" fill="#3b3b3b"/><rect x="43" y="66" width="1" height="17" fill="#606060"/><rect x="44" y="66" width="1" height="17" fill="#3b3b3b"/><rect x="45" y="66" width="1" height="17" fill="#282828"/><rect x="46" y="66" width="1" height="17" fill="#939393"/><rect x="47" y="66" width="1" height="17" fill="#8a8a8a"/><rect x="48" y="66" width="1" height="17" fill="#616161"/><rect x="49" y="66" width="1" height="17" fill="#292929"/><rect x="50" y="66" width="1" height="17" fill="#373737"/><rect x="51" y="66" width="1" height="17" fill="#b8b8b8"/><rect x="52" y="66" width="1" height="17" fill="#939393"/><rect x="53" y="66" width="1" height="17" fill="#e8e8e8"/><rect x="54" y="66" width="1" height="17" fill="#3d3d3d"/><rect x="55" y="66" width="1" height="17" fill="#2b2b2b"/><rect x="56" y="66" width="1" height="17" fill="#3d3d3d"/><rect x="57" y="66" width="1" height="17" fill="#919191"/><rect x="58" y="66" width="1" height="17" fill="#232323"/><rect x="59" y="66" width="1" height="17" fill="#5a5a5a"/><rect x="60" y="66" width="1" height="17" fill="#919191"/><rect x="61" y="66" width="1" height="17" fill="#bcbcbc"/><rect x="62" y="66" width="1" height="17" fill="#121212"/><rect x="63" y="66" width="1" height="17" fill="#111111"/><rect x="64" y="66" width="1" height="17" fill="#f0f0f0"/><rect x="65" y="66" width="1" height="17" fill="#262626"/><rect x="66" y="66" width="1" height="17" fill="#bebebe"/><rect x="67" y="66" width="1" height="17" fill="#191919"/><rect x="68" y="66" width="1" height="17" fill="#b0b0b0"/><rect x="69" y="66" width="1" height="17" fill="#303030"/><rect x="70" y="66" width="1" height="17" fill="#1f1f1f"/><rect x="71" y="66" width="1" height="17" fill="#3b3b3b"/><rect x="72" y="66" width="1" height="17" fill="#d5d5d5"/><rect x="73" y="66" width="1" height="17" fill="#dfdfdf"/><rect x="74" y="66" width="1" height="17" fill="#363636"/><rect x="75" y="66" width="1" height="17" fill="#c4c4c4"/><rect x="76" y="66" width="1" height="17" fill="#6e6e6e"/><rect x="77" y="66" width="1" height="17" fill="#282828"/><rect x="78" y="66" width="1" height="17" fill="#282828"/><rect x="79" y="66" width="1" height="17" fill="#7d7d7d"/><rect x="80" y="66" width="1" height="17" fill="#595959"/><rect x="81" y="66" width="1" height="17" fill="#2b2b2b"/><rect x="82" y="66" width="1" height="17" fill="#808080"/><rect x="83" y="66" width="1" height="17" fill="#161616"/><rect x="84" y="66" width="1" height="17" fill="#131313"/><rect x="85" y="66" width="1" height="17" fill="#c2c2c2"/><rect x="86" y="66" width="1" height="17" fill="#2f2f2f"/><rect x="87" y="66" width="1" height="17" fill="#323232"/><rect x="88" y="66" width="1" height="17" fill="#b6b6b6"/><rect x="89" y="66" width="1" height="17" fill="#d0d0d0"/><rect x="90" y="66" width="1" height="17" fill="#e6e6e6"/><rect x="91" y="66" width="1" height="17" fill="#2c2c2c"/><rect x="92" y="66" width="1" height="17" fill="#191919"/><rect x="93" y="66" width="1" height="17" fill="#c6c6c6"/><rect x="94" y="66" width="1" height="17" fill="#3a3a3a"/><rect x="95" y="66" width="1" height="17" fill="#dddddd"/><rect x="96" y="66" width="1" height="17" fill="#b5b5b5"/><rect x="97" y="66" width="1" height="17" fill="#909090"/><rect x="98" y="66" width="1" height="17" fill="#2e2e2e"/><rect x="99" y="66" width="1" height="17" fill="#141414"/><rect x="100" y="66" width="1" height="17" fill="#b7b7b7"/><rect x="101" y="66" width="1" height="17" fill="#bcbcbc"/><rect x="102" y="66" width="1" height="17" fill="#b8b8b8"/><rect x="103" y="66" width="1" height="17" fill="#171717"/><text x="110" y="74" font-family="Liberation Sans" font-size="5.2" font-weight="normal" fill="#222" stroke="#222" stroke-width="0.12" textLength="46" lengthAdjust="spacingAndGlyphs">${Compra&gt;folio}</text><text x="110" y="81" font-family="Liberation Sans" font-size="5.2" font-weight="normal" fill="#222" stroke="#222" stroke-width="0.12" textLength="47" lengthAdjust="spacingAndGlyphs">${Compra&gt;fecha}</text></svg></div><div style="position:absolute;left:672.0px;width:300px;text-align:center;top:317.51px;font-size:10.5px;line-height:10.5px;font-weight:normal;color:#5a5a62;letter-spacing:0.08px;white-space:pre;-webkit-text-stroke:0.3px #5a5a62;">formato Compra Z</div><div style="position:absolute;left:672.0px;width:300px;text-align:center;top:332.47px;font-size:9.6px;line-height:9.6px;font-weight:normal;color:#727278;letter-spacing:0.33px;white-space:pre;">57 x 33 milimetros</div>
<div style="position:absolute;left:932px;top:194px;width:192px;height:153px;background:#fff;"></div><div style="position:absolute;left:938px;top:213px;width:181px;height:85px;"><svg width="181" height="85" style="position:absolute;left:0;top:0"><rect x="0.5" y="0.5" width="180" height="84" fill="#fff" stroke="#c8c8c8"/><text x="9" y="19" font-family="Liberation Sans" font-size="5.2" font-weight="normal" fill="#222" stroke="#222" stroke-width="0.12" textLength="55" lengthAdjust="spacingAndGlyphs">${Empresa&gt;nombre}</text><text x="9" y="25" font-family="Liberation Sans" font-size="5.2" font-weight="normal" fill="#222" stroke="#222" stroke-width="0.12" textLength="65" lengthAdjust="spacingAndGlyphs">${Articulo&gt;descripcion}</text><rect x="4" y="26" width="174" height="1.5" fill="#222"/><rect x="52" y="29" width="1" height="25" fill="#3c3c3c"/><rect x="53" y="29" width="1" height="25" fill="#222222"/><rect x="54" y="29" width="1" height="25" fill="#707070"/><rect x="55" y="29" width="1" height="25" fill="#ececec"/><rect x="56" y="29" width="1" height="25" fill="#f1f1f1"/><rect x="57" y="29" width="1" height="25" fill="#313131"/><rect x="58" y="29" width="1" height="25" fill="#101010"/><rect x="59" y="29" width="1" height="25" fill="#353535"/><rect x="60" y="29" width="1" height="25" fill="#191919"/><rect x="61" y="29" width="1" height="25" fill="#cdcdcd"/><rect x="62" y="29" width="1" height="25" fill="#b5b5b5"/><rect x="63" y="29" width="1" height="25" fill="#3f3f3f"/><rect x="64" y="29" width="1" height="25" fill="#e4e4e4"/><rect x="65" y="29" width="1" height="25" fill="#595959"/><rect x="66" y="29" width="1" height="25" fill="#efefef"/><rect x="67" y="29" width="1" height="25" fill="#dfdfdf"/><rect x="68" y="29" width="1" height="25" fill="#3f3f3f"/><rect x="69" y="29" width="1" height="25" fill="#bfbfbf"/><rect x="70" y="29" width="1" height="25" fill="#b2b2b2"/><rect x="71" y="29" width="1" height="25" fill="#9b9b9b"/><rect x="72" y="29" width="1" height="25" fill="#e3e3e3"/><rect x="73" y="29" width="1" height="25" fill="#6c6c6c"/><rect x="74" y="29" width="1" height="25" fill="#ececec"/><rect x="75" y="29" width="1" height="25" fill="#cecece"/><rect x="76" y="29" width="1" height="25" fill="#1c1c1c"/><rect x="77" y="29" width="1" height="25" fill="#3a3a3a"/><rect x="78" y="29" width="1" height="25" fill="#b9b9b9"/><rect x="79" y="29" width="1" height="25" fill="#2e2e2e"/><rect x="80" y="29" width="1" height="25" fill="#868686"/><rect x="81" y="29" width="1" height="25" fill="#191919"/><rect x="82" y="29" width="1" height="25" fill="#e4e4e4"/><rect x="83" y="29" width="1" height="25" fill="#2c2c2c"/><rect x="84" y="29" width="1" height="25" fill="#7d7d7d"/><rect x="85" y="29" width="1" height="25" fill="#e1e1e1"/><rect x="86" y="29" width="1" height="25" fill="#151515"/><rect x="87" y="29" width="1" height="25" fill="#3d3d3d"/><rect x="88" y="29" width="1" height="25" fill="#efefef"/><rect x="89" y="29" width="1" height="25" fill="#141414"/><rect x="90" y="29" width="1" height="25" fill="#979797"/><rect x="91" y="29" width="1" height="25" fill="#363636"/><rect x="92" y="29" width="1" height="25" fill="#373737"/><rect x="93" y="29" width="1" height="25" fill="#3a3a3a"/><rect x="94" y="29" width="1" height="25" fill="#262626"/><rect x="95" y="29" width="1" height="25" fill="#dadada"/><rect x="96" y="29" width="1" height="25" fill="#363636"/><rect x="97" y="29" width="1" height="25" fill="#cfcfcf"/><rect x="98" y="29" width="1" height="25" fill="#141414"/><rect x="99" y="29" width="1" height="25" fill="#c6c6c6"/><rect x="100" y="29" width="1" height="25" fill="#dfdfdf"/><rect x="101" y="29" width="1" height="25" fill="#121212"/><rect x="102" y="29" width="1" height="25" fill="#cecece"/><rect x="103" y="29" width="1" height="25" fill="#1a1a1a"/><rect x="104" y="29" width="1" height="25" fill="#b1b1b1"/><rect x="105" y="29" width="1" height="25" fill="#eeeeee"/><rect x="106" y="29" width="1" height="25" fill="#747474"/><rect x="107" y="29" width="1" height="25" fill="#cfcfcf"/><rect x="108" y="29" width="1" height="25" fill="#141414"/><rect x="109" y="29" width="1" height="25" fill="#2a2a2a"/><rect x="110" y="29" width="1" height="25" fill="#ededed"/><rect x="111" y="29" width="1" height="25" fill="#222222"/><rect x="112" y="29" width="1" height="25" fill="#202020"/><rect x="113" y="29" width="1" height="25" fill="#b4b4b4"/><rect x="114" y="29" width="1" height="25" fill="#1a1a1a"/><rect x="115" y="29" width="1" height="25" fill="#252525"/><rect x="116" y="29" width="1" height="25" fill="#676767"/><rect x="117" y="29" width="1" height="25" fill="#ededed"/><rect x="118" y="29" width="1" height="25" fill="#181818"/><rect x="119" y="29" width="1" height="25" fill="#f3f3f3"/><rect x="120" y="29" width="1" height="25" fill="#ededed"/><rect x="121" y="29" width="1" height="25" fill="#1d1d1d"/><rect x="122" y="29" width="1" height="25" fill="#dedede"/><rect x="123" y="29" width="1" height="25" fill="#dfdfdf"/><rect x="124" y="29" width="1" height="25" fill="#8b8b8b"/><rect x="125" y="29" width="1" height="25" fill="#929292"/><rect x="126" y="29" width="1" height="25" fill="#323232"/><rect x="127" y="29" width="1" height="25" fill="#666666"/><rect x="128" y="29" width="1" height="25" fill="#b1b1b1"/><rect x="129" y="29" width="1" height="25" fill="#181818"/><rect x="130" y="29" width="1" height="25" fill="#b3b3b3"/><rect x="131" y="29" width="1" height="25" fill="#242424"/><rect x="132" y="29" width="1" height="25" fill="#9f9f9f"/><rect x="133" y="29" width="1" height="25" fill="#3b3b3b"/><rect x="134" y="29" width="1" height="25" fill="#181818"/><rect x="135" y="29" width="1" height="25" fill="#161616"/><rect x="136" y="29" width="1" height="25" fill="#1b1b1b"/><rect x="137" y="29" width="1" height="25" fill="#2c2c2c"/><rect x="138" y="29" width="1" height="25" fill="#b9b9b9"/><rect x="139" y="29" width="1" height="25" fill="#d4d4d4"/><rect x="140" y="29" width="1" height="25" fill="#323232"/><rect x="141" y="29" width="1" height="25" fill="#e2e2e2"/><rect x="142" y="29" width="1" height="25" fill="#717171"/><rect x="143" y="29" width="1" height="25" fill="#6c6c6c"/><rect x="144" y="29" width="1" height="25" fill="#282828"/><rect x="145" y="29" width="1" height="25" fill="#3f3f3f"/><rect x="146" y="29" width="1" height="25" fill="#5a5a5a"/><rect x="147" y="29" width="1" height="25" fill="#959595"/><rect x="148" y="29" width="1" height="25" fill="#b7b7b7"/><text x="10" y="40" font-family="Liberation Sans" font-size="5.4" font-weight="bold" fill="#222" textLength="54" lengthAdjust="spacingAndGlyphs">${Articulo&gt;precio1}</text><text x="10" y="51" font-family="Liberation Sans" font-size="5.4" font-weight="normal" fill="#222" stroke="#222" stroke-width="0.12" textLength="52" lengthAdjust="spacingAndGlyphs">${Articulo&gt;local...}</text><rect x="4" y="53" width="174" height="1.5" fill="#222"/><rect x="12" y="56" width="1" height="15" fill="#c9c9c9"/><rect x="13" y="56" width="1" height="15" fill="#e7e7e7"/><rect x="14" y="56" width="1" height="15" fill="#5c5c5c"/><rect x="15" y="56" width="1" height="15" fill="#404040"/><rect x="16" y="56" width="1" height="15" fill="#959595"/><rect x="17" y="56" width="1" height="15" fill="#2b2b2b"/><rect x="18" y="56" width="1" height="15" fill="#e4e4e4"/><rect x="19" y="56" width="1" height="15" fill="#c9c9c9"/><rect x="20" y="56" width="1" height="15" fill="#b3b3b3"/><rect x="21" y="56" width="1" height="15" fill="#cccccc"/><rect x="22" y="56" width="1" height="15" fill="#1d1d1d"/><rect x="23" y="56" width="1" height="15" fill="#868686"/><rect x="24" y="56" width="1" height="15" fill="#353535"/><rect x="25" y="56" width="1" height="15" fill="#3f3f3f"/><rect x="26" y="56" width="1" height="15" fill="#323232"/><rect x="27" y="56" width="1" height="15" fill="#969696"/><rect x="28" y="56" width="1" height="15" fill="#101010"/><rect x="29" y="56" width="1" height="15" fill="#9c9c9c"/><rect x="30" y="56" width="1" height="15" fill="#242424"/><rect x="31" y="56" width="1" height="15" fill="#e6e6e6"/><rect x="32" y="56" width="1" height="15" fill="#3c3c3c"/><rect x="33" y="56" width="1" height="15" fill="#202020"/><rect x="34" y="56" width="1" height="15" fill="#373737"/><rect x="35" y="56" width="1" height="15" fill="#2b2b2b"/><rect x="36" y="56" width="1" height="15" fill="#686868"/><rect x="37" y="56" width="1" height="15" fill="#141414"/><rect x="38" y="56" width="1" height="15" fill="#333333"/><rect x="39" y="56" width="1" height="15" fill="#b5b5b5"/><rect x="40" y="56" width="1" height="15" fill="#1d1d1d"/><rect x="41" y="56" width="1" height="15" fill="#151515"/><rect x="42" y="56" width="1" height="15" fill="#d9d9d9"/><rect x="43" y="56" width="1" height="15" fill="#121212"/><rect x="44" y="56" width="1" height="15" fill="#eaeaea"/><rect x="45" y="56" width="1" height="15" fill="#5a5a5a"/><rect x="46" y="56" width="1" height="15" fill="#3b3b3b"/><rect x="47" y="56" width="1" height="15" fill="#151515"/><rect x="48" y="56" width="1" height="15" fill="#d3d3d3"/><rect x="49" y="56" width="1" height="15" fill="#404040"/><rect x="50" y="56" width="1" height="15" fill="#8c8c8c"/><rect x="51" y="56" width="1" height="15" fill="#2e2e2e"/><rect x="52" y="56" width="1" height="15" fill="#595959"/><rect x="53" y="56" width="1" height="15" fill="#c3c3c3"/><rect x="54" y="56" width="1" height="15" fill="#979797"/><rect x="55" y="56" width="1" height="15" fill="#373737"/><rect x="56" y="56" width="1" height="15" fill="#ececec"/><rect x="57" y="56" width="1" height="15" fill="#1b1b1b"/><rect x="58" y="56" width="1" height="15" fill="#b4b4b4"/><rect x="59" y="56" width="1" height="15" fill="#e6e6e6"/><rect x="60" y="56" width="1" height="15" fill="#2b2b2b"/><rect x="61" y="56" width="1" height="15" fill="#222222"/><rect x="62" y="56" width="1" height="15" fill="#161616"/><rect x="63" y="56" width="1" height="15" fill="#121212"/><rect x="64" y="56" width="1" height="15" fill="#e6e6e6"/><rect x="65" y="56" width="1" height="15" fill="#787878"/><rect x="66" y="56" width="1" height="15" fill="#7e7e7e"/><rect x="67" y="56" width="1" height="15" fill="#9b9b9b"/><rect x="68" y="56" width="1" height="15" fill="#b3b3b3"/><rect x="69" y="56" width="1" height="15" fill="#1d1d1d"/><rect x="70" y="56" width="1" height="15" fill="#232323"/><rect x="71" y="56" width="1" height="15" fill="#363636"/><rect x="72" y="56" width="1" height="15" fill="#868686"/><rect x="73" y="56" width="1" height="15" fill="#242424"/><rect x="74" y="56" width="1" height="15" fill="#f1f1f1"/><rect x="75" y="56" width="1" height="15" fill="#b8b8b8"/><rect x="76" y="56" width="1" height="15" fill="#b5b5b5"/><rect x="77" y="56" width="1" height="15" fill="#292929"/><rect x="78" y="56" width="1" height="15" fill="#141414"/><rect x="79" y="56" width="1" height="15" fill="#242424"/><rect x="80" y="56" width="1" height="15" fill="#1d1d1d"/><rect x="81" y="56" width="1" height="15" fill="#cecece"/><rect x="82" y="56" width="1" height="15" fill="#3d3d3d"/><rect x="83" y="56" width="1" height="15" fill="#111111"/><rect x="84" y="56" width="1" height="15" fill="#404040"/><rect x="85" y="56" width="1" height="15" fill="#333333"/><rect x="86" y="56" width="1" height="15" fill="#b4b4b4"/><rect x="87" y="56" width="1" height="15" fill="#c5c5c5"/><rect x="88" y="56" width="1" height="15" fill="#f3f3f3"/><rect x="89" y="56" width="1" height="15" fill="#b6b6b6"/><rect x="90" y="56" width="1" height="15" fill="#323232"/><rect x="91" y="56" width="1" height="15" fill="#3f3f3f"/><rect x="92" y="56" width="1" height="15" fill="#dbdbdb"/><rect x="93" y="56" width="1" height="15" fill="#131313"/><rect x="94" y="56" width="1" height="15" fill="#7b7b7b"/><rect x="95" y="56" width="1" height="15" fill="#1c1c1c"/><rect x="96" y="56" width="1" height="15" fill="#e8e8e8"/><rect x="97" y="56" width="1" height="15" fill="#efefef"/><rect x="98" y="56" width="1" height="15" fill="#202020"/><rect x="99" y="56" width="1" height="15" fill="#d3d3d3"/><rect x="100" y="56" width="1" height="15" fill="#d5d5d5"/><rect x="101" y="56" width="1" height="15" fill="#ececec"/><rect x="102" y="56" width="1" height="15" fill="#d1d1d1"/><rect x="103" y="56" width="1" height="15" fill="#131313"/><rect x="104" y="56" width="1" height="15" fill="#d7d7d7"/><rect x="105" y="56" width="1" height="15" fill="#222222"/><rect x="106" y="56" width="1" height="15" fill="#1e1e1e"/><rect x="107" y="56" width="1" height="15" fill="#959595"/><rect x="108" y="56" width="1" height="15" fill="#b3b3b3"/><rect x="109" y="56" width="1" height="15" fill="#7d7d7d"/><rect x="110" y="56" width="1" height="15" fill="#ebebeb"/><rect x="111" y="56" width="1" height="15" fill="#101010"/><text x="123" y="66" font-family="Liberation Sans" font-size="5.2" font-weight="normal" fill="#222" stroke="#222" stroke-width="0.12" textLength="46" lengthAdjust="spacingAndGlyphs">${Compra&gt;folio}</text><text x="123" y="72" font-family="Liberation Sans" font-size="5.2" font-weight="normal" fill="#222" stroke="#222" stroke-width="0.12" textLength="47" lengthAdjust="spacingAndGlyphs">${Compra&gt;fecha}</text></svg></div><div style="position:absolute;left:878.0px;width:300px;text-align:center;top:317.51px;font-size:10.5px;line-height:10.5px;font-weight:normal;color:#5a5a62;letter-spacing:0.08px;white-space:pre;-webkit-text-stroke:0.3px #5a5a62;">formato Compra B</div><div style="position:absolute;left:878.0px;width:300px;text-align:center;top:332.47px;font-size:9.6px;line-height:9.6px;font-weight:normal;color:#727278;letter-spacing:0.33px;white-space:pre;">62 x 29 milimetros</div>
<div style="position:absolute;left:726px;top:362px;width:192px;height:153px;background:#fff;border:2px solid #1fa0d6;"></div><div style="position:absolute;left:739px;top:366px;width:166px;height:116px;"><svg width="166" height="116" style="position:absolute;left:0;top:0"><rect x="0.5" y="0.5" width="165" height="115" fill="#fff" stroke="#c8c8c8"/><text x="6" y="12" font-family="Liberation Sans" font-size="5.6" font-weight="bold" fill="#222" textLength="58" lengthAdjust="spacingAndGlyphs">${Empresa&gt;nombre}</text><text x="6" y="19" font-family="Liberation Sans" font-size="5.6" font-weight="normal" fill="#222" stroke="#222" stroke-width="0.12" textLength="66" lengthAdjust="spacingAndGlyphs">${Articulo&gt;descripcion}</text><rect x="0" y="25" width="166" height="1.3" fill="#1a1a1a"/><text x="6" y="35" font-family="Liberation Sans" font-size="6.8" font-weight="bold" fill="#222" textLength="61" lengthAdjust="spacingAndGlyphs">${Articulo&gt;precio1}</text><rect x="30" y="40" width="1" height="43" fill="#171717"/><rect x="31" y="40" width="1" height="43" fill="#c2c2c2"/><rect x="32" y="40" width="1" height="43" fill="#c1c1c1"/><rect x="33" y="40" width="1" height="43" fill="#f4f4f4"/><rect x="34" y="40" width="1" height="43" fill="#404040"/><rect x="35" y="40" width="1" height="43" fill="#3f3f3f"/><rect x="36" y="40" width="1" height="43" fill="#131313"/><rect x="37" y="40" width="1" height="43" fill="#323232"/><rect x="38" y="40" width="1" height="43" fill="#f3f3f3"/><rect x="39" y="40" width="1" height="43" fill="#353535"/><rect x="40" y="40" width="1" height="43" fill="#111111"/><rect x="41" y="40" width="1" height="43" fill="#e3e3e3"/><rect x="42" y="40" width="1" height="43" fill="#1d1d1d"/><rect x="43" y="40" width="1" height="43" fill="#272727"/><rect x="44" y="40" width="1" height="43" fill="#747474"/><rect x="45" y="40" width="1" height="43" fill="#1d1d1d"/><rect x="46" y="40" width="1" height="43" fill="#3a3a3a"/><rect x="47" y="40" width="1" height="43" fill="#5b5b5b"/><rect x="48" y="40" width="1" height="43" fill="#dddddd"/><rect x="49" y="40" width="1" height="43" fill="#191919"/><rect x="50" y="40" width="1" height="43" fill="#e0e0e0"/><rect x="51" y="40" width="1" height="43" fill="#3f3f3f"/><rect x="52" y="40" width="1" height="43" fill="#8d8d8d"/><rect x="53" y="40" width="1" height="43" fill="#cbcbcb"/><rect x="54" y="40" width="1" height="43" fill="#2b2b2b"/><rect x="55" y="40" width="1" height="43" fill="#c8c8c8"/><rect x="56" y="40" width="1" height="43" fill="#1e1e1e"/><rect x="57" y="40" width="1" height="43" fill="#767676"/><rect x="58" y="40" width="1" height="43" fill="#252525"/><rect x="59" y="40" width="1" height="43" fill="#929292"/><rect x="60" y="40" width="1" height="43" fill="#7d7d7d"/><rect x="61" y="40" width="1" height="43" fill="#bcbcbc"/><rect x="62" y="40" width="1" height="43" fill="#d7d7d7"/><rect x="63" y="40" width="1" height="43" fill="#d5d5d5"/><rect x="64" y="40" width="1" height="43" fill="#1c1c1c"/><rect x="65" y="40" width="1" height="43" fill="#363636"/><rect x="66" y="40" width="1" height="43" fill="#161616"/><rect x="67" y="40" width="1" height="43" fill="#d4d4d4"/><rect x="68" y="40" width="1" height="43" fill="#c9c9c9"/><rect x="69" y="40" width="1" height="43" fill="#1c1c1c"/><rect x="70" y="40" width="1" height="43" fill="#e8e8e8"/><rect x="71" y="40" width="1" height="43" fill="#131313"/><rect x="72" y="40" width="1" height="43" fill="#646464"/><rect x="73" y="40" width="1" height="43" fill="#383838"/><rect x="74" y="40" width="1" height="43" fill="#1c1c1c"/><rect x="75" y="40" width="1" height="43" fill="#1a1a1a"/><rect x="76" y="40" width="1" height="43" fill="#c3c3c3"/><rect x="77" y="40" width="1" height="43" fill="#949494"/><rect x="78" y="40" width="1" height="43" fill="#969696"/><rect x="79" y="40" width="1" height="43" fill="#272727"/><rect x="80" y="40" width="1" height="43" fill="#eeeeee"/><rect x="81" y="40" width="1" height="43" fill="#595959"/><rect x="82" y="40" width="1" height="43" fill="#eeeeee"/><rect x="83" y="40" width="1" height="43" fill="#3e3e3e"/><rect x="84" y="40" width="1" height="43" fill="#949494"/><rect x="85" y="40" width="1" height="43" fill="#b3b3b3"/><rect x="86" y="40" width="1" height="43" fill="#404040"/><rect x="87" y="40" width="1" height="43" fill="#ececec"/><rect x="88" y="40" width="1" height="43" fill="#101010"/><rect x="89" y="40" width="1" height="43" fill="#353535"/><rect x="90" y="40" width="1" height="43" fill="#1b1b1b"/><rect x="91" y="40" width="1" height="43" fill="#c0c0c0"/><rect x="92" y="40" width="1" height="43" fill="#373737"/><rect x="93" y="40" width="1" height="43" fill="#373737"/><rect x="94" y="40" width="1" height="43" fill="#c8c8c8"/><rect x="95" y="40" width="1" height="43" fill="#d6d6d6"/><rect x="96" y="40" width="1" height="43" fill="#eaeaea"/><rect x="97" y="40" width="1" height="43" fill="#969696"/><rect x="98" y="40" width="1" height="43" fill="#959595"/><rect x="99" y="40" width="1" height="43" fill="#313131"/><rect x="100" y="40" width="1" height="43" fill="#373737"/><rect x="101" y="40" width="1" height="43" fill="#909090"/><rect x="102" y="40" width="1" height="43" fill="#272727"/><rect x="103" y="40" width="1" height="43" fill="#262626"/><rect x="104" y="40" width="1" height="43" fill="#d5d5d5"/><rect x="105" y="40" width="1" height="43" fill="#c5c5c5"/><rect x="106" y="40" width="1" height="43" fill="#3a3a3a"/><rect x="107" y="40" width="1" height="43" fill="#2b2b2b"/><rect x="108" y="40" width="1" height="43" fill="#1f1f1f"/><rect x="109" y="40" width="1" height="43" fill="#232323"/><rect x="110" y="40" width="1" height="43" fill="#3d3d3d"/><rect x="111" y="40" width="1" height="43" fill="#353535"/><rect x="112" y="40" width="1" height="43" fill="#212121"/><rect x="113" y="40" width="1" height="43" fill="#b4b4b4"/><rect x="114" y="40" width="1" height="43" fill="#373737"/><rect x="115" y="40" width="1" height="43" fill="#d3d3d3"/><rect x="116" y="40" width="1" height="43" fill="#1c1c1c"/><rect x="117" y="40" width="1" height="43" fill="#3c3c3c"/><rect x="118" y="40" width="1" height="43" fill="#292929"/><rect x="119" y="40" width="1" height="43" fill="#2c2c2c"/><rect x="120" y="40" width="1" height="43" fill="#1c1c1c"/><rect x="121" y="40" width="1" height="43" fill="#242424"/><rect x="122" y="40" width="1" height="43" fill="#3c3c3c"/><rect x="123" y="40" width="1" height="43" fill="#bebebe"/><rect x="124" y="40" width="1" height="43" fill="#b8b8b8"/><rect x="125" y="40" width="1" height="43" fill="#ededed"/><rect x="126" y="40" width="1" height="43" fill="#e9e9e9"/><rect x="127" y="40" width="1" height="43" fill="#d3d3d3"/><rect x="128" y="40" width="1" height="43" fill="#e5e5e5"/><rect x="129" y="40" width="1" height="43" fill="#2e2e2e"/><rect x="130" y="40" width="1" height="43" fill="#2e2e2e"/><rect x="131" y="40" width="1" height="43" fill="#b0b0b0"/><rect x="132" y="40" width="1" height="43" fill="#212121"/><rect x="133" y="40" width="1" height="43" fill="#d6d6d6"/><rect x="134" y="40" width="1" height="43" fill="#cfcfcf"/><rect x="135" y="40" width="1" height="43" fill="#888888"/><rect x="0" y="89" width="166" height="1.3" fill="#1a1a1a"/><text x="6" y="99" font-family="Liberation Sans" font-size="5.6" font-weight="normal" fill="#222" stroke="#222" stroke-width="0.12" textLength="67" lengthAdjust="spacingAndGlyphs">${Articulo&gt;localizacion}</text></svg></div><div style="position:absolute;left:672.0px;width:300px;text-align:center;top:483.31px;font-size:10.5px;line-height:10.5px;font-weight:normal;color:#5a5a62;letter-spacing:0.08px;white-space:pre;-webkit-text-stroke:0.3px #5a5a62;">formato1 EVA</div><div style="position:absolute;left:672.0px;width:300px;text-align:center;top:498.97px;font-size:9.6px;line-height:9.6px;font-weight:normal;color:#727278;letter-spacing:0.33px;white-space:pre;">57 x 40 milimetros</div>
<div style="position:absolute;left:932px;top:362px;width:192px;height:153px;background:#fff;"></div><div style="position:absolute;left:945px;top:366px;width:166px;height:116px;"><svg width="166" height="116" style="position:absolute;left:0;top:0"><rect x="0.5" y="0.5" width="165" height="115" fill="#fff" stroke="#c8c8c8"/><text x="6" y="14" font-family="Liberation Sans" font-size="5.6" font-weight="normal" fill="#222" stroke="#222" stroke-width="0.12" textLength="65" lengthAdjust="spacingAndGlyphs">${Articulo&gt;descripcion}</text><rect x="0" y="24" width="166" height="1.5" fill="#222"/><rect x="19" y="31" width="1" height="43" fill="#1e1e1e"/><rect x="20" y="31" width="1" height="43" fill="#e1e1e1"/><rect x="21" y="31" width="1" height="43" fill="#797979"/><rect x="22" y="31" width="1" height="43" fill="#868686"/><rect x="23" y="31" width="1" height="43" fill="#b1b1b1"/><rect x="24" y="31" width="1" height="43" fill="#b2b2b2"/><rect x="25" y="31" width="1" height="43" fill="#191919"/><rect x="26" y="31" width="1" height="43" fill="#d8d8d8"/><rect x="27" y="31" width="1" height="43" fill="#393939"/><rect x="28" y="31" width="1" height="43" fill="#b7b7b7"/><rect x="29" y="31" width="1" height="43" fill="#353535"/><rect x="30" y="31" width="1" height="43" fill="#222222"/><rect x="31" y="31" width="1" height="43" fill="#cbcbcb"/><rect x="32" y="31" width="1" height="43" fill="#272727"/><rect x="33" y="31" width="1" height="43" fill="#c0c0c0"/><rect x="34" y="31" width="1" height="43" fill="#575757"/><rect x="35" y="31" width="1" height="43" fill="#191919"/><rect x="36" y="31" width="1" height="43" fill="#c6c6c6"/><rect x="37" y="31" width="1" height="43" fill="#242424"/><rect x="38" y="31" width="1" height="43" fill="#111111"/><rect x="39" y="31" width="1" height="43" fill="#6c6c6c"/><rect x="40" y="31" width="1" height="43" fill="#131313"/><rect x="41" y="31" width="1" height="43" fill="#191919"/><rect x="42" y="31" width="1" height="43" fill="#151515"/><rect x="43" y="31" width="1" height="43" fill="#3a3a3a"/><rect x="44" y="31" width="1" height="43" fill="#e2e2e2"/><rect x="45" y="31" width="1" height="43" fill="#151515"/><rect x="46" y="31" width="1" height="43" fill="#2d2d2d"/><rect x="47" y="31" width="1" height="43" fill="#e3e3e3"/><rect x="48" y="31" width="1" height="43" fill="#3f3f3f"/><rect x="49" y="31" width="1" height="43" fill="#111111"/><rect x="50" y="31" width="1" height="43" fill="#ebebeb"/><rect x="51" y="31" width="1" height="43" fill="#181818"/><rect x="52" y="31" width="1" height="43" fill="#b5b5b5"/><rect x="53" y="31" width="1" height="43" fill="#bdbdbd"/><rect x="54" y="31" width="1" height="43" fill="#c0c0c0"/><rect x="55" y="31" width="1" height="43" fill="#e4e4e4"/><rect x="56" y="31" width="1" height="43" fill="#bababa"/><rect x="57" y="31" width="1" height="43" fill="#8a8a8a"/><rect x="58" y="31" width="1" height="43" fill="#616161"/><rect x="59" y="31" width="1" height="43" fill="#cecece"/><rect x="60" y="31" width="1" height="43" fill="#272727"/><rect x="61" y="31" width="1" height="43" fill="#e4e4e4"/><rect x="62" y="31" width="1" height="43" fill="#bababa"/><rect x="63" y="31" width="1" height="43" fill="#d3d3d3"/><rect x="64" y="31" width="1" height="43" fill="#747474"/><rect x="65" y="31" width="1" height="43" fill="#3d3d3d"/><rect x="66" y="31" width="1" height="43" fill="#373737"/><rect x="67" y="31" width="1" height="43" fill="#222222"/><rect x="68" y="31" width="1" height="43" fill="#bababa"/><rect x="69" y="31" width="1" height="43" fill="#1a1a1a"/><rect x="70" y="31" width="1" height="43" fill="#1e1e1e"/><rect x="71" y="31" width="1" height="43" fill="#3a3a3a"/><rect x="72" y="31" width="1" height="43" fill="#1f1f1f"/><rect x="73" y="31" width="1" height="43" fill="#686868"/><rect x="74" y="31" width="1" height="43" fill="#646464"/><rect x="75" y="31" width="1" height="43" fill="#3b3b3b"/><rect x="76" y="31" width="1" height="43" fill="#e9e9e9"/><rect x="77" y="31" width="1" height="43" fill="#6d6d6d"/><rect x="78" y="31" width="1" height="43" fill="#949494"/><rect x="79" y="31" width="1" height="43" fill="#262626"/><rect x="80" y="31" width="1" height="43" fill="#dddddd"/><rect x="81" y="31" width="1" height="43" fill="#353535"/><rect x="82" y="31" width="1" height="43" fill="#c3c3c3"/><rect x="83" y="31" width="1" height="43" fill="#969696"/><rect x="84" y="31" width="1" height="43" fill="#6b6b6b"/><rect x="85" y="31" width="1" height="43" fill="#141414"/><rect x="86" y="31" width="1" height="43" fill="#3a3a3a"/><rect x="87" y="31" width="1" height="43" fill="#828282"/><rect x="88" y="31" width="1" height="43" fill="#292929"/><rect x="89" y="31" width="1" height="43" fill="#d7d7d7"/><rect x="90" y="31" width="1" height="43" fill="#202020"/><rect x="91" y="31" width="1" height="43" fill="#cdcdcd"/><rect x="92" y="31" width="1" height="43" fill="#d3d3d3"/><rect x="93" y="31" width="1" height="43" fill="#8a8a8a"/><rect x="94" y="31" width="1" height="43" fill="#2f2f2f"/><rect x="95" y="31" width="1" height="43" fill="#cecece"/><rect x="96" y="31" width="1" height="43" fill="#2e2e2e"/><rect x="97" y="31" width="1" height="43" fill="#727272"/><rect x="98" y="31" width="1" height="43" fill="#919191"/><rect x="99" y="31" width="1" height="43" fill="#1f1f1f"/><rect x="100" y="31" width="1" height="43" fill="#9d9d9d"/><rect x="101" y="31" width="1" height="43" fill="#b6b6b6"/><rect x="102" y="31" width="1" height="43" fill="#999999"/><rect x="103" y="31" width="1" height="43" fill="#404040"/><rect x="104" y="31" width="1" height="43" fill="#898989"/><rect x="105" y="31" width="1" height="43" fill="#d9d9d9"/><rect x="106" y="31" width="1" height="43" fill="#c6c6c6"/><rect x="107" y="31" width="1" height="43" fill="#111111"/><rect x="108" y="31" width="1" height="43" fill="#373737"/><rect x="109" y="31" width="1" height="43" fill="#686868"/><rect x="110" y="31" width="1" height="43" fill="#353535"/><rect x="111" y="31" width="1" height="43" fill="#585858"/><rect x="112" y="31" width="1" height="43" fill="#212121"/><rect x="113" y="31" width="1" height="43" fill="#9c9c9c"/><rect x="114" y="31" width="1" height="43" fill="#cfcfcf"/><rect x="115" y="31" width="1" height="43" fill="#1b1b1b"/><rect x="116" y="31" width="1" height="43" fill="#242424"/><rect x="117" y="31" width="1" height="43" fill="#6c6c6c"/><rect x="118" y="31" width="1" height="43" fill="#9d9d9d"/><rect x="119" y="31" width="1" height="43" fill="#5a5a5a"/><rect x="120" y="31" width="1" height="43" fill="#1b1b1b"/><rect x="121" y="31" width="1" height="43" fill="#151515"/><rect x="122" y="31" width="1" height="43" fill="#e8e8e8"/><rect x="123" y="31" width="1" height="43" fill="#232323"/><rect x="124" y="31" width="1" height="43" fill="#282828"/><rect x="125" y="31" width="1" height="43" fill="#d8d8d8"/><rect x="126" y="31" width="1" height="43" fill="#dfdfdf"/><rect x="127" y="31" width="1" height="43" fill="#6b6b6b"/><rect x="128" y="31" width="1" height="43" fill="#272727"/><rect x="129" y="31" width="1" height="43" fill="#1a1a1a"/><rect x="130" y="31" width="1" height="43" fill="#c6c6c6"/><rect x="131" y="31" width="1" height="43" fill="#151515"/><rect x="132" y="31" width="1" height="43" fill="#101010"/><rect x="133" y="31" width="1" height="43" fill="#242424"/><rect x="134" y="31" width="1" height="43" fill="#111111"/><rect x="135" y="31" width="1" height="43" fill="#2b2b2b"/><rect x="136" y="31" width="1" height="43" fill="#bfbfbf"/><rect x="137" y="31" width="1" height="43" fill="#c3c3c3"/><rect x="138" y="31" width="1" height="43" fill="#d3d3d3"/><rect x="139" y="31" width="1" height="43" fill="#787878"/><rect x="140" y="31" width="1" height="43" fill="#1a1a1a"/><rect x="141" y="31" width="1" height="43" fill="#ececec"/><rect x="142" y="31" width="1" height="43" fill="#e3e3e3"/><rect x="143" y="31" width="1" height="43" fill="#757575"/><rect x="144" y="31" width="1" height="43" fill="#f4f4f4"/><rect x="145" y="31" width="1" height="43" fill="#c4c4c4"/><rect x="0" y="79" width="166" height="1.5" fill="#222"/><text x="3" y="91" font-family="Liberation Sans" font-size="4.8" font-weight="normal" fill="#222" stroke="#222" stroke-width="0.12" textLength="29" lengthAdjust="spacingAndGlyphs">Fecha Fab:</text><text x="37" y="91" font-family="Liberation Sans" font-size="4.8" font-weight="bold" fill="#222" textLength="38" lengthAdjust="spacingAndGlyphs">${Lotes&gt;fec...</text><text x="83" y="91" font-family="Liberation Sans" font-size="4.8" font-weight="normal" fill="#222" stroke="#222" stroke-width="0.12" textLength="29" lengthAdjust="spacingAndGlyphs">Fecha Cad:</text><text x="117" y="91" font-family="Liberation Sans" font-size="4.8" font-weight="bold" fill="#222" textLength="38" lengthAdjust="spacingAndGlyphs">${Lotes&gt;fec...</text></svg></div><div style="position:absolute;left:878.0px;width:300px;text-align:center;top:485.11px;font-size:10.5px;line-height:10.5px;font-weight:normal;color:#5a5a62;letter-spacing:0.08px;white-space:pre;-webkit-text-stroke:0.3px #5a5a62;">formato lote EVA</div><div style="position:absolute;left:878.0px;width:300px;text-align:center;top:500.77px;font-size:9.6px;line-height:9.6px;font-weight:normal;color:#727278;letter-spacing:0.33px;white-space:pre;">57 x 40 milimetros</div>
<div style="position:absolute;left:726px;top:530px;width:192px;height:153px;background:#fff;"></div><div style="position:absolute;left:739px;top:534px;width:166px;height:116px;"><svg width="166" height="116" style="position:absolute;left:0;top:0"><rect x="0.5" y="0.5" width="165" height="115" fill="#fff" stroke="#c8c8c8"/><text x="6" y="12" font-family="Liberation Sans" font-size="5.6" font-weight="bold" fill="#222" textLength="58" lengthAdjust="spacingAndGlyphs">${Empresa&gt;nombre}</text><text x="6" y="19" font-family="Liberation Sans" font-size="5.6" font-weight="normal" fill="#222" stroke="#222" stroke-width="0.12" textLength="66" lengthAdjust="spacingAndGlyphs">${Articulo&gt;descripcion}</text><rect x="0" y="25" width="166" height="1.5" fill="#222"/><text x="6" y="35" font-family="Liberation Sans" font-size="6.8" font-weight="bold" fill="#222" textLength="61" lengthAdjust="spacingAndGlyphs">${Articulo&gt;precio1}</text><rect x="30" y="40" width="1" height="36" fill="#303030"/><rect x="31" y="40" width="1" height="36" fill="#747474"/><rect x="32" y="40" width="1" height="36" fill="#cdcdcd"/><rect x="33" y="40" width="1" height="36" fill="#d0d0d0"/><rect x="34" y="40" width="1" height="36" fill="#e2e2e2"/><rect x="35" y="40" width="1" height="36" fill="#909090"/><rect x="36" y="40" width="1" height="36" fill="#f3f3f3"/><rect x="37" y="40" width="1" height="36" fill="#a0a0a0"/><rect x="38" y="40" width="1" height="36" fill="#e1e1e1"/><rect x="39" y="40" width="1" height="36" fill="#e3e3e3"/><rect x="40" y="40" width="1" height="36" fill="#b0b0b0"/><rect x="41" y="40" width="1" height="36" fill="#b3b3b3"/><rect x="42" y="40" width="1" height="36" fill="#595959"/><rect x="43" y="40" width="1" height="36" fill="#6b6b6b"/><rect x="44" y="40" width="1" height="36" fill="#232323"/><rect x="45" y="40" width="1" height="36" fill="#404040"/><rect x="46" y="40" width="1" height="36" fill="#585858"/><rect x="47" y="40" width="1" height="36" fill="#1a1a1a"/><rect x="48" y="40" width="1" height="36" fill="#5c5c5c"/><rect x="49" y="40" width="1" height="36" fill="#bdbdbd"/><rect x="50" y="40" width="1" height="36" fill="#2d2d2d"/><rect x="51" y="40" width="1" height="36" fill="#e7e7e7"/><rect x="52" y="40" width="1" height="36" fill="#c9c9c9"/><rect x="53" y="40" width="1" height="36" fill="#dfdfdf"/><rect x="54" y="40" width="1" height="36" fill="#333333"/><rect x="55" y="40" width="1" height="36" fill="#dddddd"/><rect x="56" y="40" width="1" height="36" fill="#efefef"/><rect x="57" y="40" width="1" height="36" fill="#404040"/><rect x="58" y="40" width="1" height="36" fill="#101010"/><rect x="59" y="40" width="1" height="36" fill="#b5b5b5"/><rect x="60" y="40" width="1" height="36" fill="#f1f1f1"/><rect x="61" y="40" width="1" height="36" fill="#9a9a9a"/><rect x="62" y="40" width="1" height="36" fill="#232323"/><rect x="63" y="40" width="1" height="36" fill="#eaeaea"/><rect x="64" y="40" width="1" height="36" fill="#b3b3b3"/><rect x="65" y="40" width="1" height="36" fill="#313131"/><rect x="66" y="40" width="1" height="36" fill="#353535"/><rect x="67" y="40" width="1" height="36" fill="#e4e4e4"/><rect x="68" y="40" width="1" height="36" fill="#787878"/><rect x="69" y="40" width="1" height="36" fill="#3e3e3e"/><rect x="70" y="40" width="1" height="36" fill="#929292"/><rect x="71" y="40" width="1" height="36" fill="#323232"/><rect x="72" y="40" width="1" height="36" fill="#2d2d2d"/><rect x="73" y="40" width="1" height="36" fill="#3a3a3a"/><rect x="74" y="40" width="1" height="36" fill="#6e6e6e"/><rect x="75" y="40" width="1" height="36" fill="#7a7a7a"/><rect x="76" y="40" width="1" height="36" fill="#191919"/><rect x="77" y="40" width="1" height="36" fill="#8b8b8b"/><rect x="78" y="40" width="1" height="36" fill="#c6c6c6"/><rect x="79" y="40" width="1" height="36" fill="#2d2d2d"/><rect x="80" y="40" width="1" height="36" fill="#b1b1b1"/><rect x="81" y="40" width="1" height="36" fill="#c4c4c4"/><rect x="82" y="40" width="1" height="36" fill="#b9b9b9"/><rect x="83" y="40" width="1" height="36" fill="#959595"/><rect x="84" y="40" width="1" height="36" fill="#d4d4d4"/><rect x="85" y="40" width="1" height="36" fill="#a0a0a0"/><rect x="86" y="40" width="1" height="36" fill="#e9e9e9"/><rect x="87" y="40" width="1" height="36" fill="#575757"/><rect x="88" y="40" width="1" height="36" fill="#787878"/><rect x="89" y="40" width="1" height="36" fill="#3b3b3b"/><rect x="90" y="40" width="1" height="36" fill="#e3e3e3"/><rect x="91" y="40" width="1" height="36" fill="#383838"/><rect x="92" y="40" width="1" height="36" fill="#242424"/><rect x="93" y="40" width="1" height="36" fill="#393939"/><rect x="94" y="40" width="1" height="36" fill="#dadada"/><rect x="95" y="40" width="1" height="36" fill="#898989"/><rect x="96" y="40" width="1" height="36" fill="#a0a0a0"/><rect x="97" y="40" width="1" height="36" fill="#363636"/><rect x="98" y="40" width="1" height="36" fill="#181818"/><rect x="99" y="40" width="1" height="36" fill="#1d1d1d"/><rect x="100" y="40" width="1" height="36" fill="#d1d1d1"/><rect x="101" y="40" width="1" height="36" fill="#404040"/><rect x="102" y="40" width="1" height="36" fill="#5b5b5b"/><rect x="103" y="40" width="1" height="36" fill="#595959"/><rect x="104" y="40" width="1" height="36" fill="#b0b0b0"/><rect x="105" y="40" width="1" height="36" fill="#2c2c2c"/><rect x="106" y="40" width="1" height="36" fill="#2e2e2e"/><rect x="107" y="40" width="1" height="36" fill="#c2c2c2"/><rect x="108" y="40" width="1" height="36" fill="#212121"/><rect x="109" y="40" width="1" height="36" fill="#2f2f2f"/><rect x="110" y="40" width="1" height="36" fill="#b0b0b0"/><rect x="111" y="40" width="1" height="36" fill="#2b2b2b"/><rect x="112" y="40" width="1" height="36" fill="#161616"/><rect x="113" y="40" width="1" height="36" fill="#b1b1b1"/><rect x="114" y="40" width="1" height="36" fill="#696969"/><rect x="115" y="40" width="1" height="36" fill="#ededed"/><rect x="116" y="40" width="1" height="36" fill="#686868"/><rect x="117" y="40" width="1" height="36" fill="#f4f4f4"/><rect x="118" y="40" width="1" height="36" fill="#1d1d1d"/><rect x="119" y="40" width="1" height="36" fill="#5b5b5b"/><rect x="120" y="40" width="1" height="36" fill="#eaeaea"/><rect x="121" y="40" width="1" height="36" fill="#333333"/><rect x="122" y="40" width="1" height="36" fill="#bfbfbf"/><rect x="123" y="40" width="1" height="36" fill="#141414"/><rect x="124" y="40" width="1" height="36" fill="#676767"/><rect x="125" y="40" width="1" height="36" fill="#f1f1f1"/><rect x="126" y="40" width="1" height="36" fill="#404040"/><rect x="127" y="40" width="1" height="36" fill="#dddddd"/><rect x="128" y="40" width="1" height="36" fill="#2f2f2f"/><rect x="129" y="40" width="1" height="36" fill="#3a3a3a"/><rect x="130" y="40" width="1" height="36" fill="#323232"/><rect x="131" y="40" width="1" height="36" fill="#282828"/><rect x="132" y="40" width="1" height="36" fill="#1e1e1e"/><rect x="133" y="40" width="1" height="36" fill="#333333"/><rect x="134" y="40" width="1" height="36" fill="#2e2e2e"/><rect x="135" y="40" width="1" height="36" fill="#ececec"/><rect x="0" y="81" width="166" height="1.5" fill="#222"/><rect x="9" y="84" width="1" height="23" fill="#6f6f6f"/><rect x="10" y="84" width="1" height="23" fill="#c9c9c9"/><rect x="11" y="84" width="1" height="23" fill="#2c2c2c"/><rect x="12" y="84" width="1" height="23" fill="#222222"/><rect x="13" y="84" width="1" height="23" fill="#d1d1d1"/><rect x="14" y="84" width="1" height="23" fill="#e5e5e5"/><rect x="15" y="84" width="1" height="23" fill="#353535"/><rect x="16" y="84" width="1" height="23" fill="#2f2f2f"/><rect x="17" y="84" width="1" height="23" fill="#404040"/><rect x="18" y="84" width="1" height="23" fill="#333333"/><rect x="19" y="84" width="1" height="23" fill="#dfdfdf"/><rect x="20" y="84" width="1" height="23" fill="#3a3a3a"/><rect x="21" y="84" width="1" height="23" fill="#d6d6d6"/><rect x="22" y="84" width="1" height="23" fill="#222222"/><rect x="23" y="84" width="1" height="23" fill="#373737"/><rect x="24" y="84" width="1" height="23" fill="#747474"/><rect x="25" y="84" width="1" height="23" fill="#b9b9b9"/><rect x="26" y="84" width="1" height="23" fill="#2c2c2c"/><rect x="27" y="84" width="1" height="23" fill="#181818"/><rect x="28" y="84" width="1" height="23" fill="#cdcdcd"/><rect x="29" y="84" width="1" height="23" fill="#202020"/><rect x="30" y="84" width="1" height="23" fill="#bcbcbc"/><rect x="31" y="84" width="1" height="23" fill="#a0a0a0"/><rect x="32" y="84" width="1" height="23" fill="#3a3a3a"/><rect x="33" y="84" width="1" height="23" fill="#e3e3e3"/><rect x="34" y="84" width="1" height="23" fill="#202020"/><rect x="35" y="84" width="1" height="23" fill="#1c1c1c"/><rect x="36" y="84" width="1" height="23" fill="#8f8f8f"/><rect x="37" y="84" width="1" height="23" fill="#606060"/><rect x="38" y="84" width="1" height="23" fill="#151515"/><rect x="39" y="84" width="1" height="23" fill="#7b7b7b"/><rect x="40" y="84" width="1" height="23" fill="#2c2c2c"/><rect x="41" y="84" width="1" height="23" fill="#939393"/><rect x="42" y="84" width="1" height="23" fill="#3c3c3c"/><rect x="43" y="84" width="1" height="23" fill="#c0c0c0"/><rect x="44" y="84" width="1" height="23" fill="#1e1e1e"/><rect x="45" y="84" width="1" height="23" fill="#131313"/><rect x="46" y="84" width="1" height="23" fill="#343434"/><rect x="47" y="84" width="1" height="23" fill="#131313"/><rect x="48" y="84" width="1" height="23" fill="#9b9b9b"/><rect x="49" y="84" width="1" height="23" fill="#d3d3d3"/><rect x="50" y="84" width="1" height="23" fill="#dadada"/><rect x="51" y="84" width="1" height="23" fill="#131313"/><rect x="52" y="84" width="1" height="23" fill="#dcdcdc"/><rect x="53" y="84" width="1" height="23" fill="#c0c0c0"/><rect x="54" y="84" width="1" height="23" fill="#3a3a3a"/><rect x="55" y="84" width="1" height="23" fill="#272727"/><rect x="56" y="84" width="1" height="23" fill="#3f3f3f"/><rect x="57" y="84" width="1" height="23" fill="#eeeeee"/><rect x="58" y="84" width="1" height="23" fill="#3e3e3e"/><rect x="59" y="84" width="1" height="23" fill="#585858"/><rect x="60" y="84" width="1" height="23" fill="#343434"/><rect x="61" y="84" width="1" height="23" fill="#b7b7b7"/><rect x="62" y="84" width="1" height="23" fill="#2a2a2a"/><rect x="63" y="84" width="1" height="23" fill="#2f2f2f"/><rect x="64" y="84" width="1" height="23" fill="#3f3f3f"/><rect x="65" y="84" width="1" height="23" fill="#131313"/><rect x="66" y="84" width="1" height="23" fill="#e2e2e2"/><rect x="67" y="84" width="1" height="23" fill="#888888"/><rect x="68" y="84" width="1" height="23" fill="#8a8a8a"/><rect x="69" y="84" width="1" height="23" fill="#171717"/><rect x="70" y="84" width="1" height="23" fill="#6f6f6f"/><rect x="71" y="84" width="1" height="23" fill="#c0c0c0"/><rect x="72" y="84" width="1" height="23" fill="#646464"/><rect x="73" y="84" width="1" height="23" fill="#e0e0e0"/><rect x="74" y="84" width="1" height="23" fill="#b4b4b4"/><rect x="75" y="84" width="1" height="23" fill="#cacaca"/><rect x="76" y="84" width="1" height="23" fill="#292929"/><rect x="77" y="84" width="1" height="23" fill="#7c7c7c"/><rect x="78" y="84" width="1" height="23" fill="#ebebeb"/><rect x="79" y="84" width="1" height="23" fill="#e1e1e1"/><rect x="80" y="84" width="1" height="23" fill="#5b5b5b"/><rect x="81" y="84" width="1" height="23" fill="#171717"/><rect x="82" y="84" width="1" height="23" fill="#646464"/><rect x="83" y="84" width="1" height="23" fill="#111111"/><rect x="84" y="84" width="1" height="23" fill="#121212"/><rect x="85" y="84" width="1" height="23" fill="#c9c9c9"/><rect x="86" y="84" width="1" height="23" fill="#626262"/><rect x="87" y="84" width="1" height="23" fill="#181818"/><rect x="88" y="84" width="1" height="23" fill="#bdbdbd"/><rect x="89" y="84" width="1" height="23" fill="#c0c0c0"/><rect x="90" y="84" width="1" height="23" fill="#2b2b2b"/><rect x="91" y="84" width="1" height="23" fill="#3f3f3f"/><rect x="92" y="84" width="1" height="23" fill="#8d8d8d"/><rect x="93" y="84" width="1" height="23" fill="#d1d1d1"/><rect x="94" y="84" width="1" height="23" fill="#292929"/><rect x="95" y="84" width="1" height="23" fill="#d8d8d8"/><rect x="96" y="84" width="1" height="23" fill="#262626"/><text x="106" y="90" font-family="Liberation Sans" font-size="5.2" font-weight="normal" fill="#222" stroke="#222" stroke-width="0.12" textLength="46" lengthAdjust="spacingAndGlyphs">${Compra&gt;folio}</text><text x="106" y="98" font-family="Liberation Sans" font-size="5.2" font-weight="normal" fill="#222" stroke="#222" stroke-width="0.12" textLength="46.5" lengthAdjust="spacingAndGlyphs">${Compra&gt;fecha}</text></svg></div><div style="position:absolute;left:672.0px;width:300px;text-align:center;top:653.31px;font-size:10.5px;line-height:10.5px;font-weight:normal;color:#5a5a62;letter-spacing:0.08px;white-space:pre;-webkit-text-stroke:0.3px #5a5a62;">formato Compra EVA</div><div style="position:absolute;left:672.0px;width:300px;text-align:center;top:668.67px;font-size:9.6px;line-height:9.6px;font-weight:normal;color:#727278;letter-spacing:0.33px;white-space:pre;">57 x 40 milimetros</div>
<div style="position:absolute;left:876px;top:708px;width:113px;height:25px;background:#e6e6e6;border:1px solid #3aa6d8;border-radius:2px;box-shadow:inset 0 0 0 1px #fbfbfb"></div>
<div style="position:absolute;left:782.5px;width:300px;text-align:center;top:715.64px;font-size:12px;line-height:12px;font-weight:bold;color:#4a4a5a;letter-spacing:0px;white-space:pre;">Cargar más</div>
<div style="position:absolute;left:702px;top:56px;width:456px;height:685px;border:3px solid #ff0000"></div>
</body></html>
